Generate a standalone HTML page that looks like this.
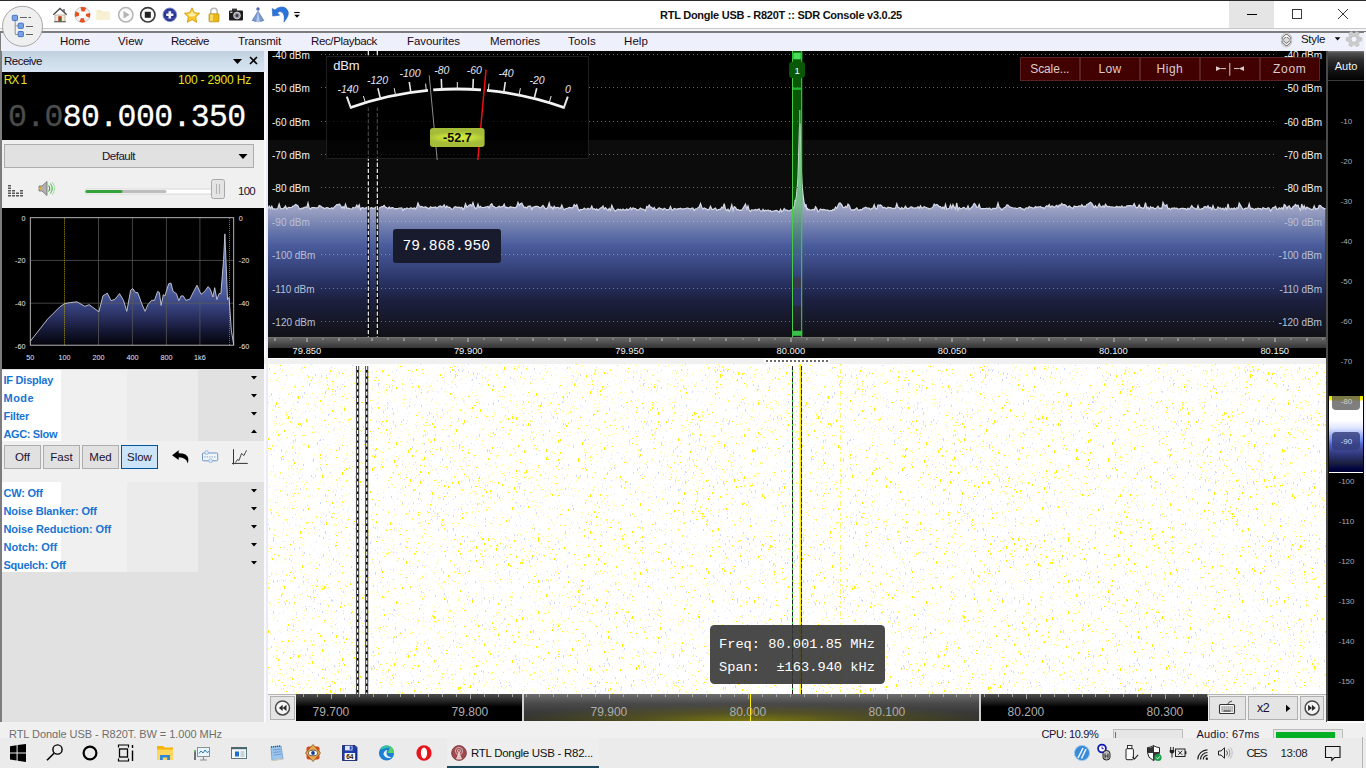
<!DOCTYPE html><html><head><meta charset="utf-8"><title>SDR Console</title><style>
html,body{margin:0;padding:0;}
body{width:1366px;height:768px;overflow:hidden;position:relative;background:#f0f0f0;font-family:"Liberation Sans",sans-serif;}
.t{position:absolute;white-space:pre;line-height:1;}
.r{position:absolute;}
.mono{font-family:"Liberation Mono",monospace;}
.serif{font-family:"Liberation Serif",serif;}
svg{position:absolute;left:0;top:0;overflow:visible;}
</style></head><body><div class="r" style="left:0px;top:0px;width:1366px;height:29px;background:#fff;"></div>
<div class="r" style="left:0px;top:0px;width:1366px;height:1px;background:#2b2b2b;"></div>
<div class="r" style="left:1229px;top:1px;width:45px;height:27px;background:#e5e5e5;"></div>
<svg width="1366" height="30"><path d="M1247 14.5h10" stroke="#000" stroke-width="1"/><rect x="1292.5" y="9.5" width="9" height="9" fill="none" stroke="#3a3a3a" stroke-width="1"/><path d="M1338 9l10 10M1348 9l-10 10" stroke="#3a3a3a" stroke-width="1"/></svg>
<span class="t" style="left:660.0px;top:10px;font-size:11px;color:#111;font-weight:bold;letter-spacing:-0.255px;">RTL Dongle USB - R820T :: SDR Console v3.0.25</span>
<div class="r" style="left:0px;top:28px;width:1366px;height:1px;background:#c8c8c8;"></div>
<div class="r" style="left:0px;top:29px;width:1366px;height:3px;background:#f4f5fc;"></div>
<div class="r" style="left:0px;top:31px;width:1366px;height:2px;background:#7d7d7d;"></div>
<div class="r" style="left:0px;top:33px;width:1366px;height:18px;background:#eef0fb;"></div>
<div class="r" style="left:0px;top:32px;width:1.3px;height:20px;background:#7d7d7d;"></div>
<div class="r" style="left:0px;top:51px;width:2px;height:671px;background:#7d7d7d;"></div>
<span class="t" style="left:60.0px;top:36px;font-size:11.5px;color:#1a0a1a;letter-spacing:-0.169px;">Home</span>
<span class="t" style="left:118.0px;top:36px;font-size:11.5px;color:#1a0a1a;letter-spacing:0.07px;">View</span>
<span class="t" style="left:171.0px;top:36px;font-size:11.5px;color:#1a0a1a;letter-spacing:-0.507px;">Receive</span>
<span class="t" style="left:238.0px;top:36px;font-size:11.5px;color:#1a0a1a;letter-spacing:-0.163px;">Transmit</span>
<span class="t" style="left:311.0px;top:36px;font-size:11.5px;color:#1a0a1a;letter-spacing:-0.359px;">Rec/Playback</span>
<span class="t" style="left:407.0px;top:36px;font-size:11.5px;color:#1a0a1a;letter-spacing:-0.069px;">Favourites</span>
<span class="t" style="left:490.0px;top:36px;font-size:11.5px;color:#1a0a1a;letter-spacing:-0.06px;">Memories</span>
<span class="t" style="left:568.0px;top:36px;font-size:11.5px;color:#1a0a1a;letter-spacing:0.231px;">Tools</span>
<span class="t" style="left:624.0px;top:36px;font-size:11.5px;color:#1a0a1a;letter-spacing:0.087px;">Help</span>
<span class="t" style="left:1301.0px;top:34px;font-size:11.5px;color:#111;letter-spacing:-0.313px;">Style</span>
<svg width="1366" height="60"><path d="M1334.800 37.200h5.600l-2.800 3.200z" fill="#000"/></svg>
<div class="r" style="left:2px;top:51px;width:266px;height:672px;background:#e9ebf9;"></div>
<div class="r" style="left:264px;top:72px;width:1.7px;height:650px;background:#fbfbfe;"></div>
<div class="r" style="left:2px;top:51px;width:262px;height:21px;background:linear-gradient(#c3cfde 0%,#c9d9e6 35%,#d0e0ee 70%,#d9e4f2 100%);"></div>
<span class="t" style="left:4.0px;top:56px;font-size:11.5px;color:#1a0a1a;letter-spacing:-0.507px;">Receive</span>
<svg width="270" height="80"><path d="M233 59h9l-4.5 5z" fill="#000"/><path d="M250 57l7 7M257 57l-7 7" stroke="#000" stroke-width="1.6"/></svg>
<div class="r" style="left:2px;top:72px;width:262px;height:68px;background:#000;"></div>
<span class="t" style="left:3.8px;top:74px;font-size:12px;color:#e8e020;letter-spacing:-1.095px;">RX 1</span>
<span class="t" style="left:178.0px;top:74px;font-size:12px;color:#e8e020;letter-spacing:-0.183px;">100 - 2900 Hz</span>
<span class="t mono" style="left:8.0px;top:102px;font-size:31.5px;color:#4c4c4c;letter-spacing:-0.63px;-webkit-text-stroke:0.3px #4c4c4c;">0.0</span>
<span class="t mono" style="left:62.8px;top:102px;font-size:31.5px;color:#fff;letter-spacing:-0.63px;-webkit-text-stroke:0.3px #fff;">80.000.350</span>
<div class="r" style="left:2px;top:140px;width:262px;height:68px;background:#f0f0f0;"></div>
<div class="r" style="left:4px;top:144px;width:250px;height:24px;background:#e1e1e1;border:1px solid #adadad;box-sizing:border-box;"></div>
<span class="t" style="left:102.0px;top:151px;font-size:11.5px;color:#1a1030;letter-spacing:-0.491px;">Default</span>
<svg width="270" height="200"><path d="M238.5 154h9l-4.5 5z" fill="#000"/></svg>
<div class="r" style="left:2px;top:208px;width:262px;height:161px;background:#000;"></div>
<div class="r" style="left:2px;top:369px;width:262px;height:354px;background:#e1e1e1;"></div>
<div class="r" style="left:2px;top:370px;width:59px;height:71px;background:#fff;"></div>
<div class="r" style="left:61px;top:370px;width:66px;height:71px;background:#f0f0f0;"></div>
<div class="r" style="left:127px;top:370px;width:71px;height:71px;background:#ebebeb;"></div>
<div class="r" style="left:2px;top:482px;width:59px;height:90px;background:#fff;"></div>
<div class="r" style="left:61px;top:482px;width:66px;height:90px;background:#f0f0f0;"></div>
<div class="r" style="left:127px;top:482px;width:71px;height:90px;background:#ebebeb;"></div>
<div class="r" style="left:2px;top:441px;width:262px;height:41px;background:#f0f0f0;"></div>
<span class="t" style="left:3.5px;top:375px;font-size:11px;color:#1874d2;font-weight:bold;letter-spacing:-0.236px;">IF Display</span>
<span class="t" style="left:3.5px;top:393px;font-size:11px;color:#1874d2;font-weight:bold;letter-spacing:0.495px;">Mode</span>
<span class="t" style="left:3.5px;top:411px;font-size:11px;color:#1874d2;font-weight:bold;letter-spacing:-0.232px;">Filter</span>
<span class="t" style="left:3.5px;top:429px;font-size:11px;color:#1874d2;font-weight:bold;letter-spacing:-0.359px;">AGC: Slow</span>
<span class="t" style="left:3.5px;top:488px;font-size:11px;color:#1874d2;font-weight:bold;letter-spacing:-0.219px;">CW: Off</span>
<span class="t" style="left:3.5px;top:506px;font-size:11px;color:#1874d2;font-weight:bold;letter-spacing:-0.143px;">Noise Blanker: Off</span>
<span class="t" style="left:3.5px;top:524px;font-size:11px;color:#1874d2;font-weight:bold;letter-spacing:-0.09px;">Noise Reduction: Off</span>
<span class="t" style="left:3.5px;top:542px;font-size:11px;color:#1874d2;font-weight:bold;letter-spacing:-0.017px;">Notch: Off</span>
<span class="t" style="left:3.5px;top:560px;font-size:11px;color:#1874d2;font-weight:bold;letter-spacing:-0.266px;">Squelch: Off</span>
<svg width="270" height="600"><path d="M251 376h6l-3 3.5z" fill="#000"/><path d="M251 394h6l-3 3.5z" fill="#000"/><path d="M251 412h6l-3 3.5z" fill="#000"/><path d="M251 433h6l-3-3.5z" fill="#000"/><path d="M251 489h6l-3 3.5z" fill="#000"/><path d="M251 507h6l-3 3.5z" fill="#000"/><path d="M251 525h6l-3 3.5z" fill="#000"/><path d="M251 543h6l-3 3.5z" fill="#000"/><path d="M251 561h6l-3 3.5z" fill="#000"/></svg>
<div class="r" style="left:4px;top:445px;width:37px;height:24px;background:#e1e1e1;border:1px solid #adadad;box-sizing:border-box;"></div>
<span class="t" style="left:14.9px;top:452px;font-size:11.5px;color:#1a1030;">Off</span>
<div class="r" style="left:43px;top:445px;width:37px;height:24px;background:#e1e1e1;border:1px solid #adadad;box-sizing:border-box;"></div>
<span class="t" style="left:50.3px;top:452px;font-size:11.5px;color:#1a1030;">Fast</span>
<div class="r" style="left:82px;top:445px;width:37px;height:24px;background:#e1e1e1;border:1px solid #adadad;box-sizing:border-box;"></div>
<span class="t" style="left:89.3px;top:452px;font-size:11.5px;color:#1a1030;">Med</span>
<div class="r" style="left:121px;top:445px;width:37px;height:24px;background:#cce4f7;border:1px solid #005499;box-sizing:border-box;"></div>
<span class="t" style="left:127.0px;top:452px;font-size:11.5px;color:#1a1030;">Slow</span>
<svg width="270" height="380"><defs><linearGradient id="ag" gradientUnits="userSpaceOnUse" x1="0" y1="282" x2="0" y2="345"><stop offset="0" stop-color="#5a6cae"/><stop offset="0.35" stop-color="#3a4684"/><stop offset="0.6" stop-color="#252b58"/><stop offset="0.8" stop-color="#12152e"/><stop offset="1" stop-color="#04040c"/></linearGradient></defs><polygon points="30.3,341.2 47.6,319.1 59.8,306.9 64.6,303.6 70.8,302.5 77.0,301.8 84.8,306.3 89.2,304.7 95.2,309.1 98.9,311.8 102.9,295.9 107.3,293.2 111.1,300.7 115.1,299.2 119.5,293.6 123.5,300.3 126.8,311.3 130.6,290.3 132.8,288.6 135.5,292.5 137.7,292.5 141.7,303.6 145.0,311.3 147.9,304.7 151.6,300.3 154.5,300.3 157.6,291.4 159.4,292.5 161.1,305.4 163.3,294.7 164.9,295.9 168.7,283.7 170.9,283.0 173.1,291.4 176.4,293.6 178.8,300.7 181.1,295.9 183.3,295.9 185.9,300.3 189.9,299.2 193.7,291.4 197.0,285.2 201.0,294.3 204.7,291.4 208.1,286.6 210.3,289.2 212.9,297.0 214.7,287.7 216.9,299.6 219.1,293.6 220.9,293.6 223.6,259.3 224.9,233.9 226.2,266.0 227.5,299.6 229.1,297.4 231.3,330.2 233.7,344.8 233.7,345.2 30.3,345.2" fill="url(#ag)"/><path d="M98.5 218V345" stroke="#5a5a5a" stroke-width="1" opacity="0.75"/><path d="M132.4 218V345" stroke="#5a5a5a" stroke-width="1" opacity="0.75"/><path d="M166.4 218V345" stroke="#5a5a5a" stroke-width="1" opacity="0.75"/><path d="M199.9 218V345" stroke="#5a5a5a" stroke-width="1" opacity="0.75"/><path d="M30.5 260.4H233.5" stroke="#5a5a5a" stroke-width="1" opacity="0.75"/><path d="M30.5 303.2H233.5" stroke="#5a5a5a" stroke-width="1" opacity="0.75"/><path d="M64.6 218V345" stroke="#c8b400" stroke-width="0.8" stroke-dasharray="1.5 0.7" opacity="0.85"/><path d="M229.5 218V345" stroke="#c8a000" stroke-width="0.8" stroke-dasharray="1 1" opacity="0.85"/><polyline points="30.3,341.2 47.6,319.1 59.8,306.9 64.6,303.6 70.8,302.5 77.0,301.8 84.8,306.3 89.2,304.7 95.2,309.1 98.9,311.8 102.9,295.9 107.3,293.2 111.1,300.7 115.1,299.2 119.5,293.6 123.5,300.3 126.8,311.3 130.6,290.3 132.8,288.6 135.5,292.5 137.7,292.5 141.7,303.6 145.0,311.3 147.9,304.7 151.6,300.3 154.5,300.3 157.6,291.4 159.4,292.5 161.1,305.4 163.3,294.7 164.9,295.9 168.7,283.7 170.9,283.0 173.1,291.4 176.4,293.6 178.8,300.7 181.1,295.9 183.3,295.9 185.9,300.3 189.9,299.2 193.7,291.4 197.0,285.2 201.0,294.3 204.7,291.4 208.1,286.6 210.3,289.2 212.9,297.0 214.7,287.7 216.9,299.6 219.1,293.6 220.9,293.6 223.6,259.3 224.9,233.9 226.2,266.0 227.5,299.6 229.1,297.4 231.3,330.2 233.7,344.8" fill="none" stroke="#c9ccd6" stroke-width="0.9"/><rect x="30.3" y="217.7" width="203.4" height="127.5" fill="none" stroke="#c8c8c8" stroke-width="0.9"/></svg>
<span class="t" style="left:21.5px;top:215px;font-size:7.2px;color:#e8e8f0;">0</span>
<span class="t" style="left:238.8px;top:215px;font-size:7.2px;color:#e8e8f0;">0</span>
<span class="t" style="left:15.1px;top:257px;font-size:7.2px;color:#e8e8f0;">-20</span>
<span class="t" style="left:238.8px;top:257px;font-size:7.2px;color:#e8e8f0;">-20</span>
<span class="t" style="left:15.1px;top:300px;font-size:7.2px;color:#e8e8f0;">-40</span>
<span class="t" style="left:238.8px;top:300px;font-size:7.2px;color:#e8e8f0;">-40</span>
<span class="t" style="left:15.1px;top:343px;font-size:7.2px;color:#e8e8f0;">-60</span>
<span class="t" style="left:238.8px;top:343px;font-size:7.2px;color:#e8e8f0;">-60</span>
<span class="t" style="left:26.3px;top:354px;font-size:7.2px;color:#e8e8f0;">50</span>
<span class="t" style="left:58.6px;top:354px;font-size:7.2px;color:#e8e8f0;">100</span>
<span class="t" style="left:92.5px;top:354px;font-size:7.2px;color:#e8e8f0;">200</span>
<span class="t" style="left:126.4px;top:354px;font-size:7.2px;color:#e8e8f0;">400</span>
<span class="t" style="left:160.4px;top:354px;font-size:7.2px;color:#e8e8f0;">800</span>
<span class="t" style="left:194.1px;top:354px;font-size:7.2px;color:#e8e8f0;">1k6</span>
<svg width="270" height="210"><rect x="8" y="195.0" width="3" height="1.5" fill="#555"/><rect x="8" y="192.5" width="3" height="1.5" fill="#555"/><rect x="8" y="190.0" width="3" height="1.5" fill="#555"/><rect x="8" y="187.5" width="3" height="1.5" fill="#555"/><rect x="8" y="185.0" width="3" height="1.5" fill="#555"/><rect x="12" y="195.0" width="3" height="1.5" fill="#555"/><rect x="12" y="192.5" width="3" height="1.5" fill="#555"/><rect x="12" y="190.0" width="3" height="1.5" fill="#555"/><rect x="16" y="195.0" width="3" height="1.5" fill="#555"/><rect x="16" y="192.5" width="3" height="1.5" fill="#555"/><rect x="20" y="195.0" width="3" height="1.5" fill="#555"/><rect x="20" y="192.5" width="3" height="1.5" fill="#555"/><rect x="20" y="190.0" width="3" height="1.5" fill="#555"/><path d="M39 186h3l5-4.5v14l-5-4.5h-3z" fill="#b0b0b0" stroke="#707070" stroke-width="0.8"/><circle cx="40.5" cy="188.5" r="1.4" fill="#e8b020"/><path d="M48.5 185.5q2.5 3 0 6" fill="none" stroke="#3aa03a" stroke-width="1.1"/><path d="M50.3 183.5q4 5 0 10" fill="none" stroke="#58c058" stroke-width="1.1"/><path d="M52.2 182q5 6.5 0 13" fill="none" stroke="#9ad89a" stroke-width="0.9"/><rect x="85" y="189" width="127" height="5" rx="2" fill="#fdfdfd" stroke="#d0d0d0" stroke-width="0.8"/><rect x="85.5" y="190" width="81" height="3" rx="1.5" fill="#bdbdbd"/><rect x="85.5" y="190" width="37" height="3" rx="1.5" fill="#35a33b"/><rect x="211.5" y="179.5" width="13" height="19" rx="2" fill="#e4e4e4" stroke="#a8a8a8" stroke-width="1"/><path d="M216.5 184v10M219.5 184v10" stroke="#b4b4b4" stroke-width="1"/></svg>
<span class="t" style="left:238.0px;top:186px;font-size:11.5px;color:#1a1030;letter-spacing:-0.729px;">100</span>
<svg width="270" height="480"><path d="M172.100 455.200L178.700 450.200V453.200Q187.500 453.200 188.300 458.500Q188.600 461 187.700 463.600Q186.500 457.500 178.700 457.300V460.100Z" fill="#000"/><rect x="202.500" y="453" width="15.200" height="7.800" rx="1" fill="#f2f6fb" stroke="#6a94c8" stroke-width="1"/><path d="M204 456.900h12.500" stroke="#9ab4d4" stroke-width="1.400" stroke-dasharray="1.500 1"/><circle cx="206.600" cy="452.600" r="1.900" fill="#dce8f6" stroke="#8aacd6" stroke-width="0.700"/><circle cx="210.600" cy="460.700" r="1.900" fill="#dce8f6" stroke="#8aacd6" stroke-width="0.700"/><path d="M233.500 449.200V464.500M232 463.400H247.800" stroke="#333" stroke-width="1" fill="none"/><path d="M235.500 462.500l2-3 1.500 1 2.500-7 2.500 2 2.500-5.200" stroke="#333" stroke-width="0.900" fill="none"/></svg>
<div class="r" style="left:268px;top:51px;width:1058px;height:89px;background:#000;"></div>
<div class="r" style="left:268px;top:140px;width:1058px;height:197px;background:#0c0c0c;"></div>
<svg width="1366" height="360"><defs><linearGradient id="sg" gradientUnits="userSpaceOnUse" x1="0" y1="205" x2="0" y2="337"><stop offset="0.000" stop-color="#a2a8c8"/><stop offset="0.076" stop-color="#8e96bc"/><stop offset="0.174" stop-color="#6e7cae"/><stop offset="0.303" stop-color="#4a5c9c"/><stop offset="0.432" stop-color="#3c4a86"/><stop offset="0.568" stop-color="#2a3466"/><stop offset="0.720" stop-color="#1c2040"/><stop offset="0.871" stop-color="#161828"/><stop offset="1.000" stop-color="#111116"/></linearGradient></defs><rect x="792" y="51" width="10.2" height="286" fill="#085808"/><polygon points="268.0,208.7 269.2,206.1 270.5,208.6 271.8,206.1 273.0,209.0 274.2,208.8 275.5,209.0 276.8,209.0 278.0,207.8 279.2,204.0 280.5,208.3 281.8,208.8 283.0,208.6 284.2,207.8 285.5,205.9 286.8,209.0 288.0,207.8 289.2,207.4 290.5,207.5 291.8,207.5 293.0,206.1 294.2,205.8 295.5,204.4 296.8,205.1 298.0,205.8 299.2,208.6 300.5,209.0 301.8,208.2 303.0,208.3 304.2,207.3 305.5,207.0 306.8,207.4 308.0,203.0 309.2,207.9 310.5,209.2 311.8,207.7 313.0,207.6 314.2,207.5 315.5,207.9 316.8,207.9 318.0,207.7 319.2,205.6 320.5,206.1 321.8,207.1 323.0,207.5 324.2,208.5 325.5,208.1 326.8,207.5 328.0,207.7 329.2,208.6 330.5,208.5 331.8,207.7 333.0,208.8 334.2,207.1 335.5,206.1 336.8,204.7 338.0,204.7 339.2,204.0 340.5,205.4 341.8,208.2 343.0,206.6 344.2,208.4 345.5,204.3 346.8,208.3 348.0,208.2 349.2,208.3 350.5,209.0 351.8,209.0 353.0,207.5 354.2,207.9 355.5,207.8 356.8,205.1 358.0,207.5 359.2,204.8 360.5,209.6 361.8,207.8 363.0,207.7 364.2,208.4 365.5,208.2 366.8,207.4 368.0,209.7 369.2,208.0 370.5,208.1 371.8,207.6 373.0,208.4 374.2,208.2 375.5,207.5 376.8,206.4 378.0,210.2 379.2,207.9 380.5,207.2 381.8,206.7 383.0,206.5 384.2,205.4 385.5,207.3 386.8,207.8 388.0,208.6 389.2,207.0 390.5,208.5 391.8,207.7 393.0,207.7 394.2,208.9 395.5,208.6 396.8,208.7 398.0,208.5 399.2,208.0 400.5,208.0 401.8,207.8 403.0,210.5 404.2,208.6 405.5,209.1 406.8,208.0 408.0,208.5 409.2,208.9 410.5,207.8 411.8,208.0 413.0,208.9 414.2,207.9 415.5,209.0 416.8,207.2 418.0,203.0 419.2,205.6 420.5,207.0 421.8,206.5 423.0,207.3 424.2,207.1 425.5,206.8 426.8,207.6 428.0,208.1 429.2,208.7 430.5,206.8 431.8,207.5 433.0,207.3 434.2,207.3 435.5,207.0 436.8,208.2 438.0,207.3 439.2,206.3 440.5,206.0 441.8,207.1 443.0,206.1 444.2,204.8 445.5,208.0 446.8,206.0 448.0,207.4 449.2,207.2 450.5,207.9 451.8,209.4 453.0,209.0 454.2,207.3 455.5,206.7 456.8,207.3 458.0,207.3 459.2,207.2 460.5,208.0 461.8,207.3 463.0,209.4 464.2,208.1 465.5,203.8 466.8,207.0 468.0,206.2 469.2,205.2 470.5,204.4 471.8,205.8 473.0,202.6 474.2,206.6 475.5,208.6 476.8,207.8 478.0,204.2 479.2,207.7 480.5,206.3 481.8,207.7 483.0,207.5 484.2,207.5 485.5,206.9 486.8,207.0 488.0,206.3 489.2,208.0 490.5,204.8 491.8,203.7 493.0,206.2 494.2,206.6 495.5,207.9 496.8,207.6 498.0,207.1 499.2,206.0 500.5,207.5 501.8,206.6 503.0,206.2 504.2,204.2 505.5,207.9 506.8,207.3 508.0,208.1 509.2,207.6 510.5,206.7 511.8,207.4 513.0,207.3 514.2,207.6 515.5,207.9 516.8,206.1 518.0,202.5 519.2,205.2 520.5,203.8 521.8,203.0 523.0,205.4 524.2,207.5 525.5,207.2 526.8,208.1 528.0,206.4 529.2,206.1 530.5,206.1 531.8,209.3 533.0,207.1 534.2,207.1 535.5,206.4 536.8,206.4 538.0,206.5 539.2,207.3 540.5,208.0 541.8,206.6 543.0,205.5 544.2,207.1 545.5,208.9 546.8,208.6 548.0,206.9 549.2,203.0 550.5,207.8 551.8,206.9 553.0,209.1 554.2,206.2 555.5,208.0 556.8,207.5 558.0,207.3 559.2,208.2 560.5,208.3 561.8,205.2 563.0,208.3 564.2,209.7 565.5,208.7 566.8,208.4 568.0,208.0 569.2,207.4 570.5,207.7 571.8,208.0 573.0,207.3 574.2,204.6 575.5,206.1 576.8,204.6 578.0,208.3 579.2,210.7 580.5,209.5 581.8,209.7 583.0,209.3 584.2,208.1 585.5,209.2 586.8,209.2 588.0,208.2 589.2,209.1 590.5,208.7 591.8,206.0 593.0,209.4 594.2,208.8 595.5,209.7 596.8,208.8 598.0,210.3 599.2,209.1 600.5,208.1 601.8,207.5 603.0,205.9 604.2,209.1 605.5,207.7 606.8,209.1 608.0,210.5 609.2,208.4 610.5,210.3 611.8,205.3 613.0,208.1 614.2,209.8 615.5,211.1 616.8,210.0 618.0,209.0 619.2,210.0 620.5,209.3 621.8,210.6 623.0,209.0 624.2,209.7 625.5,210.2 626.8,208.8 628.0,210.2 629.2,209.3 630.5,207.7 631.8,209.7 633.0,207.8 634.2,208.6 635.5,208.5 636.8,209.8 638.0,209.9 639.2,209.5 640.5,208.1 641.8,209.2 643.0,209.1 644.2,209.8 645.5,210.7 646.8,206.5 648.0,207.2 649.2,205.0 650.5,207.3 651.8,207.4 653.0,209.6 654.2,207.4 655.5,209.6 656.8,209.8 658.0,208.8 659.2,207.8 660.5,208.7 661.8,208.9 663.0,209.9 664.2,208.3 665.5,208.9 666.8,210.0 668.0,209.7 669.2,209.3 670.5,206.6 671.8,209.9 673.0,209.9 674.2,208.5 675.5,208.8 676.8,209.4 678.0,208.7 679.2,208.9 680.5,208.2 681.8,209.0 683.0,208.8 684.2,208.9 685.5,208.5 686.8,208.2 688.0,208.2 689.2,208.7 690.5,209.0 691.8,208.2 693.0,208.2 694.2,210.6 695.5,208.9 696.8,209.0 698.0,207.7 699.2,207.0 700.5,203.6 701.8,207.3 703.0,209.0 704.2,207.9 705.5,208.6 706.8,209.3 708.0,210.0 709.2,209.1 710.5,206.3 711.8,209.3 713.0,209.3 714.2,208.8 715.5,208.0 716.8,210.2 718.0,209.9 719.2,209.3 720.5,209.3 721.8,207.1 723.0,208.0 724.2,203.6 725.5,209.1 726.8,210.5 728.0,209.0 729.2,211.3 730.5,209.2 731.8,204.9 733.0,210.4 734.2,206.6 735.5,207.5 736.8,209.8 738.0,209.5 739.2,210.4 740.5,210.2 741.8,210.4 743.0,208.3 744.2,206.2 745.5,204.1 746.8,209.1 748.0,205.9 749.2,210.1 750.5,211.5 751.8,209.7 753.0,210.2 754.2,210.1 755.5,209.4 756.8,210.2 758.0,209.4 759.2,208.9 760.5,211.2 761.8,211.2 763.0,209.3 764.2,211.1 765.5,210.2 766.8,210.7 768.0,209.9 769.2,211.0 770.5,210.5 771.8,211.8 773.0,211.1 774.2,210.9 775.5,210.6 776.8,210.3 778.0,211.2 779.2,212.5 780.5,209.4 781.8,211.6 783.0,210.8 784.2,208.6 785.5,210.1 786.8,210.1 788.0,210.6 789.2,210.9 790.5,210.1 791.8,209.7 793.0,208.8 793.5,208.5 794.0,206.7 794.5,205.7 795.0,201.1 795.5,201.8 796.0,198.8 796.5,196.0 797.0,190.3 797.5,185.1 798.0,177.3 798.5,161.9 799.0,144.2 799.5,127.4 800.0,123.4 800.5,144.1 801.0,161.2 801.5,173.5 802.0,182.9 802.5,189.3 803.0,194.3 803.5,198.6 804.0,201.9 804.5,203.6 805.0,206.0 805.5,206.6 806.0,204.2 806.5,208.2 807.0,209.7 807.5,208.6 808.0,209.6 809.2,209.4 810.5,210.4 811.8,209.8 813.0,209.5 814.2,210.2 815.5,206.8 816.8,208.6 818.0,211.7 819.2,210.6 820.5,209.1 821.8,209.8 823.0,209.4 824.2,209.6 825.5,209.9 826.8,210.1 828.0,210.1 829.2,211.3 830.5,210.3 831.8,210.7 833.0,209.5 834.2,209.9 835.5,207.1 836.8,208.5 838.0,205.4 839.2,203.1 840.5,203.0 841.8,204.9 843.0,207.3 844.2,207.8 845.5,206.3 846.8,207.4 848.0,204.2 849.2,205.4 850.5,209.0 851.8,210.4 853.0,209.7 854.2,209.8 855.5,209.0 856.8,207.9 858.0,209.9 859.2,210.5 860.5,209.5 861.8,210.0 863.0,208.3 864.2,208.2 865.5,207.2 866.8,207.9 868.0,208.1 869.2,208.0 870.5,209.6 871.8,208.4 873.0,208.0 874.2,204.7 875.5,208.4 876.8,209.0 878.0,204.9 879.2,205.3 880.5,205.0 881.8,206.0 883.0,207.9 884.2,207.1 885.5,207.9 886.8,208.5 888.0,207.2 889.2,207.6 890.5,207.7 891.8,208.1 893.0,208.3 894.2,208.3 895.5,208.2 896.8,203.8 898.0,207.3 899.2,207.7 900.5,209.2 901.8,207.5 903.0,208.9 904.2,208.2 905.5,206.1 906.8,208.5 908.0,208.3 909.2,208.4 910.5,207.0 911.8,206.8 913.0,207.9 914.2,208.2 915.5,207.9 916.8,207.9 918.0,206.7 919.2,208.3 920.5,205.9 921.8,208.4 923.0,207.5 924.2,206.6 925.5,207.2 926.8,207.8 928.0,208.0 929.2,209.2 930.5,208.2 931.8,208.0 933.0,207.0 934.2,204.0 935.5,205.2 936.8,204.4 938.0,205.3 939.2,206.6 940.5,206.7 941.8,208.5 943.0,207.1 944.2,208.8 945.5,204.3 946.8,209.4 948.0,208.7 949.2,208.4 950.5,204.9 951.8,208.5 953.0,204.7 954.2,207.2 955.5,209.0 956.8,203.0 958.0,210.1 959.2,207.5 960.5,208.6 961.8,208.6 963.0,207.5 964.2,207.4 965.5,208.8 966.8,208.8 968.0,205.9 969.2,209.3 970.5,208.4 971.8,207.3 973.0,205.5 974.2,203.4 975.5,204.7 976.8,207.4 978.0,207.3 979.2,204.5 980.5,208.6 981.8,208.6 983.0,208.7 984.2,208.6 985.5,208.7 986.8,208.1 988.0,208.9 989.2,208.0 990.5,208.8 991.8,209.7 993.0,208.3 994.2,208.3 995.5,208.8 996.8,207.4 998.0,203.0 999.2,207.4 1000.5,208.3 1001.8,210.1 1003.0,208.8 1004.2,207.8 1005.5,207.3 1006.8,204.9 1008.0,205.1 1009.2,206.6 1010.5,207.1 1011.8,207.5 1013.0,207.8 1014.2,208.0 1015.5,208.2 1016.8,208.6 1018.0,208.3 1019.2,207.7 1020.5,207.6 1021.8,208.8 1023.0,208.8 1024.2,209.9 1025.5,208.2 1026.8,207.8 1028.0,208.2 1029.2,206.5 1030.5,207.5 1031.8,207.4 1033.0,208.4 1034.2,207.8 1035.5,206.5 1036.8,207.5 1038.0,206.9 1039.2,207.0 1040.5,206.5 1041.8,207.8 1043.0,207.5 1044.2,208.6 1045.5,206.8 1046.8,205.8 1048.0,206.6 1049.2,204.6 1050.5,207.4 1051.8,205.9 1053.0,206.3 1054.2,207.5 1055.5,206.2 1056.8,205.4 1058.0,207.1 1059.2,204.9 1060.5,205.4 1061.8,203.4 1063.0,204.8 1064.2,204.7 1065.5,205.1 1066.8,206.5 1068.0,207.2 1069.2,205.9 1070.5,207.0 1071.8,207.9 1073.0,208.4 1074.2,206.0 1075.5,206.6 1076.8,206.7 1078.0,206.4 1079.2,205.9 1080.5,206.5 1081.8,204.7 1083.0,206.9 1084.2,205.9 1085.5,206.9 1086.8,204.4 1088.0,204.1 1089.2,203.2 1090.5,202.2 1091.8,203.3 1093.0,205.4 1094.2,207.6 1095.5,205.7 1096.8,207.9 1098.0,206.7 1099.2,203.9 1100.5,206.6 1101.8,207.3 1103.0,205.7 1104.2,207.3 1105.5,204.2 1106.8,206.1 1108.0,206.9 1109.2,206.4 1110.5,207.0 1111.8,206.9 1113.0,207.0 1114.2,207.4 1115.5,207.1 1116.8,206.3 1118.0,207.2 1119.2,206.7 1120.5,207.4 1121.8,206.0 1123.0,207.5 1124.2,206.8 1125.5,207.3 1126.8,205.9 1128.0,205.8 1129.2,205.6 1130.5,205.7 1131.8,206.1 1133.0,205.8 1134.2,203.6 1135.5,206.6 1136.8,207.9 1138.0,207.1 1139.2,204.9 1140.5,207.7 1141.8,207.7 1143.0,208.5 1144.2,207.6 1145.5,202.6 1146.8,208.2 1148.0,207.2 1149.2,209.5 1150.5,206.8 1151.8,208.0 1153.0,207.3 1154.2,208.7 1155.5,208.7 1156.8,207.6 1158.0,206.2 1159.2,208.3 1160.5,208.1 1161.8,208.5 1163.0,202.4 1164.2,205.1 1165.5,205.7 1166.8,204.8 1168.0,208.9 1169.2,208.2 1170.5,209.7 1171.8,208.2 1173.0,208.4 1174.2,207.8 1175.5,208.4 1176.8,208.1 1178.0,209.0 1179.2,209.1 1180.5,208.5 1181.8,208.3 1183.0,208.4 1184.2,208.7 1185.5,208.6 1186.8,209.8 1188.0,208.1 1189.2,209.4 1190.5,207.5 1191.8,205.6 1193.0,207.5 1194.2,208.0 1195.5,208.8 1196.8,209.3 1198.0,205.6 1199.2,209.2 1200.5,209.4 1201.8,208.5 1203.0,208.9 1204.2,206.8 1205.5,206.6 1206.8,207.6 1208.0,205.7 1209.2,208.1 1210.5,207.3 1211.8,209.5 1213.0,205.6 1214.2,208.9 1215.5,209.6 1216.8,209.3 1218.0,207.0 1219.2,208.3 1220.5,207.9 1221.8,209.4 1223.0,208.2 1224.2,209.8 1225.5,207.9 1226.8,209.8 1228.0,203.9 1229.2,208.6 1230.5,209.2 1231.8,208.2 1233.0,209.4 1234.2,207.9 1235.5,209.4 1236.8,207.7 1238.0,208.4 1239.2,203.1 1240.5,205.2 1241.8,207.5 1243.0,209.4 1244.2,209.1 1245.5,208.1 1246.8,208.4 1248.0,207.9 1249.2,203.8 1250.5,208.8 1251.8,208.1 1253.0,208.7 1254.2,209.7 1255.5,208.7 1256.8,209.1 1258.0,208.2 1259.2,208.6 1260.5,208.6 1261.8,209.6 1263.0,207.6 1264.2,208.4 1265.5,208.7 1266.8,209.0 1268.0,207.7 1269.2,208.2 1270.5,211.1 1271.8,209.2 1273.0,207.5 1274.2,207.4 1275.5,206.3 1276.8,209.3 1278.0,209.1 1279.2,207.8 1280.5,208.7 1281.8,207.7 1283.0,209.4 1284.2,204.6 1285.5,205.5 1286.8,208.9 1288.0,206.7 1289.2,205.8 1290.5,208.3 1291.8,208.9 1293.0,206.6 1294.2,206.0 1295.5,204.5 1296.8,206.0 1298.0,205.1 1299.2,208.0 1300.5,210.2 1301.8,204.0 1303.0,208.6 1304.2,205.8 1305.5,209.0 1306.8,207.1 1308.0,207.9 1309.2,208.3 1310.5,209.0 1311.8,209.5 1313.0,209.2 1314.2,205.9 1315.5,209.3 1316.8,208.7 1318.0,208.7 1319.2,205.4 1320.5,205.5 1321.8,207.2 1323.0,207.8 1324.2,208.8 1325.5,208.4 1326,337 268,337" fill="url(#sg)"/><polyline points="268.0,208.7 269.2,206.1 270.5,208.6 271.8,206.1 273.0,209.0 274.2,208.8 275.5,209.0 276.8,209.0 278.0,207.8 279.2,204.0 280.5,208.3 281.8,208.8 283.0,208.6 284.2,207.8 285.5,205.9 286.8,209.0 288.0,207.8 289.2,207.4 290.5,207.5 291.8,207.5 293.0,206.1 294.2,205.8 295.5,204.4 296.8,205.1 298.0,205.8 299.2,208.6 300.5,209.0 301.8,208.2 303.0,208.3 304.2,207.3 305.5,207.0 306.8,207.4 308.0,203.0 309.2,207.9 310.5,209.2 311.8,207.7 313.0,207.6 314.2,207.5 315.5,207.9 316.8,207.9 318.0,207.7 319.2,205.6 320.5,206.1 321.8,207.1 323.0,207.5 324.2,208.5 325.5,208.1 326.8,207.5 328.0,207.7 329.2,208.6 330.5,208.5 331.8,207.7 333.0,208.8 334.2,207.1 335.5,206.1 336.8,204.7 338.0,204.7 339.2,204.0 340.5,205.4 341.8,208.2 343.0,206.6 344.2,208.4 345.5,204.3 346.8,208.3 348.0,208.2 349.2,208.3 350.5,209.0 351.8,209.0 353.0,207.5 354.2,207.9 355.5,207.8 356.8,205.1 358.0,207.5 359.2,204.8 360.5,209.6 361.8,207.8 363.0,207.7 364.2,208.4 365.5,208.2 366.8,207.4 368.0,209.7 369.2,208.0 370.5,208.1 371.8,207.6 373.0,208.4 374.2,208.2 375.5,207.5 376.8,206.4 378.0,210.2 379.2,207.9 380.5,207.2 381.8,206.7 383.0,206.5 384.2,205.4 385.5,207.3 386.8,207.8 388.0,208.6 389.2,207.0 390.5,208.5 391.8,207.7 393.0,207.7 394.2,208.9 395.5,208.6 396.8,208.7 398.0,208.5 399.2,208.0 400.5,208.0 401.8,207.8 403.0,210.5 404.2,208.6 405.5,209.1 406.8,208.0 408.0,208.5 409.2,208.9 410.5,207.8 411.8,208.0 413.0,208.9 414.2,207.9 415.5,209.0 416.8,207.2 418.0,203.0 419.2,205.6 420.5,207.0 421.8,206.5 423.0,207.3 424.2,207.1 425.5,206.8 426.8,207.6 428.0,208.1 429.2,208.7 430.5,206.8 431.8,207.5 433.0,207.3 434.2,207.3 435.5,207.0 436.8,208.2 438.0,207.3 439.2,206.3 440.5,206.0 441.8,207.1 443.0,206.1 444.2,204.8 445.5,208.0 446.8,206.0 448.0,207.4 449.2,207.2 450.5,207.9 451.8,209.4 453.0,209.0 454.2,207.3 455.5,206.7 456.8,207.3 458.0,207.3 459.2,207.2 460.5,208.0 461.8,207.3 463.0,209.4 464.2,208.1 465.5,203.8 466.8,207.0 468.0,206.2 469.2,205.2 470.5,204.4 471.8,205.8 473.0,202.6 474.2,206.6 475.5,208.6 476.8,207.8 478.0,204.2 479.2,207.7 480.5,206.3 481.8,207.7 483.0,207.5 484.2,207.5 485.5,206.9 486.8,207.0 488.0,206.3 489.2,208.0 490.5,204.8 491.8,203.7 493.0,206.2 494.2,206.6 495.5,207.9 496.8,207.6 498.0,207.1 499.2,206.0 500.5,207.5 501.8,206.6 503.0,206.2 504.2,204.2 505.5,207.9 506.8,207.3 508.0,208.1 509.2,207.6 510.5,206.7 511.8,207.4 513.0,207.3 514.2,207.6 515.5,207.9 516.8,206.1 518.0,202.5 519.2,205.2 520.5,203.8 521.8,203.0 523.0,205.4 524.2,207.5 525.5,207.2 526.8,208.1 528.0,206.4 529.2,206.1 530.5,206.1 531.8,209.3 533.0,207.1 534.2,207.1 535.5,206.4 536.8,206.4 538.0,206.5 539.2,207.3 540.5,208.0 541.8,206.6 543.0,205.5 544.2,207.1 545.5,208.9 546.8,208.6 548.0,206.9 549.2,203.0 550.5,207.8 551.8,206.9 553.0,209.1 554.2,206.2 555.5,208.0 556.8,207.5 558.0,207.3 559.2,208.2 560.5,208.3 561.8,205.2 563.0,208.3 564.2,209.7 565.5,208.7 566.8,208.4 568.0,208.0 569.2,207.4 570.5,207.7 571.8,208.0 573.0,207.3 574.2,204.6 575.5,206.1 576.8,204.6 578.0,208.3 579.2,210.7 580.5,209.5 581.8,209.7 583.0,209.3 584.2,208.1 585.5,209.2 586.8,209.2 588.0,208.2 589.2,209.1 590.5,208.7 591.8,206.0 593.0,209.4 594.2,208.8 595.5,209.7 596.8,208.8 598.0,210.3 599.2,209.1 600.5,208.1 601.8,207.5 603.0,205.9 604.2,209.1 605.5,207.7 606.8,209.1 608.0,210.5 609.2,208.4 610.5,210.3 611.8,205.3 613.0,208.1 614.2,209.8 615.5,211.1 616.8,210.0 618.0,209.0 619.2,210.0 620.5,209.3 621.8,210.6 623.0,209.0 624.2,209.7 625.5,210.2 626.8,208.8 628.0,210.2 629.2,209.3 630.5,207.7 631.8,209.7 633.0,207.8 634.2,208.6 635.5,208.5 636.8,209.8 638.0,209.9 639.2,209.5 640.5,208.1 641.8,209.2 643.0,209.1 644.2,209.8 645.5,210.7 646.8,206.5 648.0,207.2 649.2,205.0 650.5,207.3 651.8,207.4 653.0,209.6 654.2,207.4 655.5,209.6 656.8,209.8 658.0,208.8 659.2,207.8 660.5,208.7 661.8,208.9 663.0,209.9 664.2,208.3 665.5,208.9 666.8,210.0 668.0,209.7 669.2,209.3 670.5,206.6 671.8,209.9 673.0,209.9 674.2,208.5 675.5,208.8 676.8,209.4 678.0,208.7 679.2,208.9 680.5,208.2 681.8,209.0 683.0,208.8 684.2,208.9 685.5,208.5 686.8,208.2 688.0,208.2 689.2,208.7 690.5,209.0 691.8,208.2 693.0,208.2 694.2,210.6 695.5,208.9 696.8,209.0 698.0,207.7 699.2,207.0 700.5,203.6 701.8,207.3 703.0,209.0 704.2,207.9 705.5,208.6 706.8,209.3 708.0,210.0 709.2,209.1 710.5,206.3 711.8,209.3 713.0,209.3 714.2,208.8 715.5,208.0 716.8,210.2 718.0,209.9 719.2,209.3 720.5,209.3 721.8,207.1 723.0,208.0 724.2,203.6 725.5,209.1 726.8,210.5 728.0,209.0 729.2,211.3 730.5,209.2 731.8,204.9 733.0,210.4 734.2,206.6 735.5,207.5 736.8,209.8 738.0,209.5 739.2,210.4 740.5,210.2 741.8,210.4 743.0,208.3 744.2,206.2 745.5,204.1 746.8,209.1 748.0,205.9 749.2,210.1 750.5,211.5 751.8,209.7 753.0,210.2 754.2,210.1 755.5,209.4 756.8,210.2 758.0,209.4 759.2,208.9 760.5,211.2 761.8,211.2 763.0,209.3 764.2,211.1 765.5,210.2 766.8,210.7 768.0,209.9 769.2,211.0 770.5,210.5 771.8,211.8 773.0,211.1 774.2,210.9 775.5,210.6 776.8,210.3 778.0,211.2 779.2,212.5 780.5,209.4 781.8,211.6 783.0,210.8 784.2,208.6 785.5,210.1 786.8,210.1 788.0,210.6 789.2,210.9 790.5,210.1 791.8,209.7 793.0,208.8 793.5,208.5 794.0,206.7 794.5,205.7 795.0,201.1 795.5,201.8 796.0,198.8 796.5,196.0 797.0,190.3 797.5,185.1 798.0,177.3 798.5,161.9 799.0,144.2 799.5,127.4 800.0,123.4 800.5,144.1 801.0,161.2 801.5,173.5 802.0,182.9 802.5,189.3 803.0,194.3 803.5,198.6 804.0,201.9 804.5,203.6 805.0,206.0 805.5,206.6 806.0,204.2 806.5,208.2 807.0,209.7 807.5,208.6 808.0,209.6 809.2,209.4 810.5,210.4 811.8,209.8 813.0,209.5 814.2,210.2 815.5,206.8 816.8,208.6 818.0,211.7 819.2,210.6 820.5,209.1 821.8,209.8 823.0,209.4 824.2,209.6 825.5,209.9 826.8,210.1 828.0,210.1 829.2,211.3 830.5,210.3 831.8,210.7 833.0,209.5 834.2,209.9 835.5,207.1 836.8,208.5 838.0,205.4 839.2,203.1 840.5,203.0 841.8,204.9 843.0,207.3 844.2,207.8 845.5,206.3 846.8,207.4 848.0,204.2 849.2,205.4 850.5,209.0 851.8,210.4 853.0,209.7 854.2,209.8 855.5,209.0 856.8,207.9 858.0,209.9 859.2,210.5 860.5,209.5 861.8,210.0 863.0,208.3 864.2,208.2 865.5,207.2 866.8,207.9 868.0,208.1 869.2,208.0 870.5,209.6 871.8,208.4 873.0,208.0 874.2,204.7 875.5,208.4 876.8,209.0 878.0,204.9 879.2,205.3 880.5,205.0 881.8,206.0 883.0,207.9 884.2,207.1 885.5,207.9 886.8,208.5 888.0,207.2 889.2,207.6 890.5,207.7 891.8,208.1 893.0,208.3 894.2,208.3 895.5,208.2 896.8,203.8 898.0,207.3 899.2,207.7 900.5,209.2 901.8,207.5 903.0,208.9 904.2,208.2 905.5,206.1 906.8,208.5 908.0,208.3 909.2,208.4 910.5,207.0 911.8,206.8 913.0,207.9 914.2,208.2 915.5,207.9 916.8,207.9 918.0,206.7 919.2,208.3 920.5,205.9 921.8,208.4 923.0,207.5 924.2,206.6 925.5,207.2 926.8,207.8 928.0,208.0 929.2,209.2 930.5,208.2 931.8,208.0 933.0,207.0 934.2,204.0 935.5,205.2 936.8,204.4 938.0,205.3 939.2,206.6 940.5,206.7 941.8,208.5 943.0,207.1 944.2,208.8 945.5,204.3 946.8,209.4 948.0,208.7 949.2,208.4 950.5,204.9 951.8,208.5 953.0,204.7 954.2,207.2 955.5,209.0 956.8,203.0 958.0,210.1 959.2,207.5 960.5,208.6 961.8,208.6 963.0,207.5 964.2,207.4 965.5,208.8 966.8,208.8 968.0,205.9 969.2,209.3 970.5,208.4 971.8,207.3 973.0,205.5 974.2,203.4 975.5,204.7 976.8,207.4 978.0,207.3 979.2,204.5 980.5,208.6 981.8,208.6 983.0,208.7 984.2,208.6 985.5,208.7 986.8,208.1 988.0,208.9 989.2,208.0 990.5,208.8 991.8,209.7 993.0,208.3 994.2,208.3 995.5,208.8 996.8,207.4 998.0,203.0 999.2,207.4 1000.5,208.3 1001.8,210.1 1003.0,208.8 1004.2,207.8 1005.5,207.3 1006.8,204.9 1008.0,205.1 1009.2,206.6 1010.5,207.1 1011.8,207.5 1013.0,207.8 1014.2,208.0 1015.5,208.2 1016.8,208.6 1018.0,208.3 1019.2,207.7 1020.5,207.6 1021.8,208.8 1023.0,208.8 1024.2,209.9 1025.5,208.2 1026.8,207.8 1028.0,208.2 1029.2,206.5 1030.5,207.5 1031.8,207.4 1033.0,208.4 1034.2,207.8 1035.5,206.5 1036.8,207.5 1038.0,206.9 1039.2,207.0 1040.5,206.5 1041.8,207.8 1043.0,207.5 1044.2,208.6 1045.5,206.8 1046.8,205.8 1048.0,206.6 1049.2,204.6 1050.5,207.4 1051.8,205.9 1053.0,206.3 1054.2,207.5 1055.5,206.2 1056.8,205.4 1058.0,207.1 1059.2,204.9 1060.5,205.4 1061.8,203.4 1063.0,204.8 1064.2,204.7 1065.5,205.1 1066.8,206.5 1068.0,207.2 1069.2,205.9 1070.5,207.0 1071.8,207.9 1073.0,208.4 1074.2,206.0 1075.5,206.6 1076.8,206.7 1078.0,206.4 1079.2,205.9 1080.5,206.5 1081.8,204.7 1083.0,206.9 1084.2,205.9 1085.5,206.9 1086.8,204.4 1088.0,204.1 1089.2,203.2 1090.5,202.2 1091.8,203.3 1093.0,205.4 1094.2,207.6 1095.5,205.7 1096.8,207.9 1098.0,206.7 1099.2,203.9 1100.5,206.6 1101.8,207.3 1103.0,205.7 1104.2,207.3 1105.5,204.2 1106.8,206.1 1108.0,206.9 1109.2,206.4 1110.5,207.0 1111.8,206.9 1113.0,207.0 1114.2,207.4 1115.5,207.1 1116.8,206.3 1118.0,207.2 1119.2,206.7 1120.5,207.4 1121.8,206.0 1123.0,207.5 1124.2,206.8 1125.5,207.3 1126.8,205.9 1128.0,205.8 1129.2,205.6 1130.5,205.7 1131.8,206.1 1133.0,205.8 1134.2,203.6 1135.5,206.6 1136.8,207.9 1138.0,207.1 1139.2,204.9 1140.5,207.7 1141.8,207.7 1143.0,208.5 1144.2,207.6 1145.5,202.6 1146.8,208.2 1148.0,207.2 1149.2,209.5 1150.5,206.8 1151.8,208.0 1153.0,207.3 1154.2,208.7 1155.5,208.7 1156.8,207.6 1158.0,206.2 1159.2,208.3 1160.5,208.1 1161.8,208.5 1163.0,202.4 1164.2,205.1 1165.5,205.7 1166.8,204.8 1168.0,208.9 1169.2,208.2 1170.5,209.7 1171.8,208.2 1173.0,208.4 1174.2,207.8 1175.5,208.4 1176.8,208.1 1178.0,209.0 1179.2,209.1 1180.5,208.5 1181.8,208.3 1183.0,208.4 1184.2,208.7 1185.5,208.6 1186.8,209.8 1188.0,208.1 1189.2,209.4 1190.5,207.5 1191.8,205.6 1193.0,207.5 1194.2,208.0 1195.5,208.8 1196.8,209.3 1198.0,205.6 1199.2,209.2 1200.5,209.4 1201.8,208.5 1203.0,208.9 1204.2,206.8 1205.5,206.6 1206.8,207.6 1208.0,205.7 1209.2,208.1 1210.5,207.3 1211.8,209.5 1213.0,205.6 1214.2,208.9 1215.5,209.6 1216.8,209.3 1218.0,207.0 1219.2,208.3 1220.5,207.9 1221.8,209.4 1223.0,208.2 1224.2,209.8 1225.5,207.9 1226.8,209.8 1228.0,203.9 1229.2,208.6 1230.5,209.2 1231.8,208.2 1233.0,209.4 1234.2,207.9 1235.5,209.4 1236.8,207.7 1238.0,208.4 1239.2,203.1 1240.5,205.2 1241.8,207.5 1243.0,209.4 1244.2,209.1 1245.5,208.1 1246.8,208.4 1248.0,207.9 1249.2,203.8 1250.5,208.8 1251.8,208.1 1253.0,208.7 1254.2,209.7 1255.5,208.7 1256.8,209.1 1258.0,208.2 1259.2,208.6 1260.5,208.6 1261.8,209.6 1263.0,207.6 1264.2,208.4 1265.5,208.7 1266.8,209.0 1268.0,207.7 1269.2,208.2 1270.5,211.1 1271.8,209.2 1273.0,207.5 1274.2,207.4 1275.5,206.3 1276.8,209.3 1278.0,209.1 1279.2,207.8 1280.5,208.7 1281.8,207.7 1283.0,209.4 1284.2,204.6 1285.5,205.5 1286.8,208.9 1288.0,206.7 1289.2,205.8 1290.5,208.3 1291.8,208.9 1293.0,206.6 1294.2,206.0 1295.5,204.5 1296.8,206.0 1298.0,205.1 1299.2,208.0 1300.5,210.2 1301.8,204.0 1303.0,208.6 1304.2,205.8 1305.5,209.0 1306.8,207.1 1308.0,207.9 1309.2,208.3 1310.5,209.0 1311.8,209.5 1313.0,209.2 1314.2,205.9 1315.5,209.3 1316.8,208.7 1318.0,208.7 1319.2,205.4 1320.5,205.5 1321.8,207.2 1323.0,207.8 1324.2,208.8 1325.5,208.4" fill="none" stroke="#d6dae6" stroke-width="1.2"/><path d="M321 54.5H1277" stroke="#666666" stroke-width="1" stroke-dasharray="1 3"/><path d="M321 87.5H1277" stroke="#666666" stroke-width="1" stroke-dasharray="1 3"/><path d="M321 121.5H1277" stroke="#666666" stroke-width="1" stroke-dasharray="1 3"/><path d="M321 154.5H1277" stroke="#666666" stroke-width="1" stroke-dasharray="1 3"/><path d="M321 187.5H1277" stroke="#666666" stroke-width="1" stroke-dasharray="1 3"/><path d="M321 221.5H1277" stroke="rgba(215,225,255,0.42)" stroke-width="1" stroke-dasharray="1 3"/><path d="M321 254.5H1277" stroke="rgba(215,225,255,0.42)" stroke-width="1" stroke-dasharray="1 3"/><path d="M321 288.5H1277" stroke="rgba(215,225,255,0.42)" stroke-width="1" stroke-dasharray="1 3"/><path d="M321 321.5H1277" stroke="rgba(215,225,255,0.42)" stroke-width="1" stroke-dasharray="1 3"/><path d="M368.3 51V337" stroke="#000" stroke-width="2.4"/><path d="M368.3 51V337" stroke="#fff" stroke-width="1.15" stroke-dasharray="4.3 1.9"/><path d="M377.3 51V337" stroke="#000" stroke-width="2.4"/><path d="M377.3 51V337" stroke="#fff" stroke-width="1.15" stroke-dasharray="4.3 1.9"/></svg>
<span class="t" style="left:272.0px;top:51px;font-size:10px;color:#f2f2f2;">-40 dBm</span>
<span class="t" style="left:1284.2px;top:51px;font-size:10px;color:#f2f2f2;">-40 dBm</span>
<span class="t" style="left:272.0px;top:84px;font-size:10px;color:#f2f2f2;">-50 dBm</span>
<span class="t" style="left:1284.2px;top:84px;font-size:10px;color:#f2f2f2;">-50 dBm</span>
<span class="t" style="left:272.0px;top:118px;font-size:10px;color:#f2f2f2;">-60 dBm</span>
<span class="t" style="left:1284.2px;top:118px;font-size:10px;color:#f2f2f2;">-60 dBm</span>
<span class="t" style="left:272.0px;top:151px;font-size:10px;color:#f2f2f2;">-70 dBm</span>
<span class="t" style="left:1284.2px;top:151px;font-size:10px;color:#f2f2f2;">-70 dBm</span>
<span class="t" style="left:272.0px;top:184px;font-size:10px;color:#f2f2f2;">-80 dBm</span>
<span class="t" style="left:1284.2px;top:184px;font-size:10px;color:#f2f2f2;">-80 dBm</span>
<span class="t" style="left:272.0px;top:218px;font-size:10px;color:#b9c0d6;">-90 dBm</span>
<span class="t" style="left:1284.2px;top:218px;font-size:10px;color:#b9c0d6;">-90 dBm</span>
<span class="t" style="left:272.0px;top:251px;font-size:10px;color:#b9c0d6;">-100 dBm</span>
<span class="t" style="left:1278.6px;top:251px;font-size:10px;color:#b9c0d6;">-100 dBm</span>
<span class="t" style="left:272.0px;top:285px;font-size:10px;color:#b9c0d6;">-110 dBm</span>
<span class="t" style="left:1279.4px;top:285px;font-size:10px;color:#b9c0d6;">-110 dBm</span>
<span class="t" style="left:272.0px;top:318px;font-size:10px;color:#b9c0d6;">-120 dBm</span>
<span class="t" style="left:1278.6px;top:318px;font-size:10px;color:#b9c0d6;">-120 dBm</span>
<div class="r" style="left:268px;top:337px;width:1058px;height:11px;background:linear-gradient(#7a7a7a 0%,#636363 12%,#565656 40%,#424242 75%,#363636 100%);"></div>
<div class="r" style="left:268px;top:348px;width:1058px;height:10px;background:#000;"></div>
<svg width="1366" height="360" shape-rendering="crispEdges"><rect x="274" y="338" width="2" height="3" fill="#8e8e8e"/><rect x="290" y="338" width="2" height="2" fill="#848484" opacity="0.8"/><rect x="306" y="338" width="2" height="4" fill="#8e8e8e"/><rect x="322" y="338" width="2" height="2" fill="#848484" opacity="0.8"/><rect x="338" y="338" width="2" height="3" fill="#8e8e8e"/><rect x="354" y="338" width="2" height="2" fill="#848484" opacity="0.8"/><rect x="371" y="338" width="2" height="3" fill="#8e8e8e"/><rect x="387" y="338" width="2" height="2" fill="#848484" opacity="0.8"/><rect x="403" y="338" width="2" height="3" fill="#8e8e8e"/><rect x="419" y="338" width="2" height="2" fill="#848484" opacity="0.8"/><rect x="435" y="338" width="2" height="3" fill="#8e8e8e"/><rect x="451" y="338" width="2" height="2" fill="#848484" opacity="0.8"/><rect x="467" y="338" width="2" height="4" fill="#8e8e8e"/><rect x="483" y="338" width="2" height="2" fill="#848484" opacity="0.8"/><rect x="500" y="338" width="2" height="3" fill="#8e8e8e"/><rect x="516" y="338" width="2" height="2" fill="#848484" opacity="0.8"/><rect x="532" y="338" width="2" height="3" fill="#8e8e8e"/><rect x="548" y="338" width="2" height="2" fill="#848484" opacity="0.8"/><rect x="564" y="338" width="2" height="3" fill="#8e8e8e"/><rect x="580" y="338" width="2" height="2" fill="#848484" opacity="0.8"/><rect x="596" y="338" width="2" height="3" fill="#8e8e8e"/><rect x="612" y="338" width="2" height="2" fill="#848484" opacity="0.8"/><rect x="629" y="338" width="2" height="4" fill="#8e8e8e"/><rect x="645" y="338" width="2" height="2" fill="#848484" opacity="0.8"/><rect x="661" y="338" width="2" height="3" fill="#8e8e8e"/><rect x="677" y="338" width="2" height="2" fill="#848484" opacity="0.8"/><rect x="693" y="338" width="2" height="3" fill="#8e8e8e"/><rect x="709" y="338" width="2" height="2" fill="#848484" opacity="0.8"/><rect x="725" y="338" width="2" height="3" fill="#8e8e8e"/><rect x="742" y="338" width="2" height="2" fill="#848484" opacity="0.8"/><rect x="758" y="338" width="2" height="3" fill="#8e8e8e"/><rect x="774" y="338" width="2" height="2" fill="#848484" opacity="0.8"/><rect x="790" y="338" width="2" height="4" fill="#8e8e8e"/><rect x="806" y="338" width="2" height="2" fill="#848484" opacity="0.8"/><rect x="822" y="338" width="2" height="3" fill="#8e8e8e"/><rect x="838" y="338" width="2" height="2" fill="#848484" opacity="0.8"/><rect x="854" y="338" width="2" height="3" fill="#8e8e8e"/><rect x="871" y="338" width="2" height="2" fill="#848484" opacity="0.8"/><rect x="887" y="338" width="2" height="3" fill="#8e8e8e"/><rect x="903" y="338" width="2" height="2" fill="#848484" opacity="0.8"/><rect x="919" y="338" width="2" height="3" fill="#8e8e8e"/><rect x="935" y="338" width="2" height="2" fill="#848484" opacity="0.8"/><rect x="951" y="338" width="2" height="4" fill="#8e8e8e"/><rect x="967" y="338" width="2" height="2" fill="#848484" opacity="0.8"/><rect x="983" y="338" width="2" height="3" fill="#8e8e8e"/><rect x="1000" y="338" width="2" height="2" fill="#848484" opacity="0.8"/><rect x="1016" y="338" width="2" height="3" fill="#8e8e8e"/><rect x="1032" y="338" width="2" height="2" fill="#848484" opacity="0.8"/><rect x="1048" y="338" width="2" height="3" fill="#8e8e8e"/><rect x="1064" y="338" width="2" height="2" fill="#848484" opacity="0.8"/><rect x="1080" y="338" width="2" height="3" fill="#8e8e8e"/><rect x="1096" y="338" width="2" height="2" fill="#848484" opacity="0.8"/><rect x="1113" y="338" width="2" height="4" fill="#8e8e8e"/><rect x="1129" y="338" width="2" height="2" fill="#848484" opacity="0.8"/><rect x="1145" y="338" width="2" height="3" fill="#8e8e8e"/><rect x="1161" y="338" width="2" height="2" fill="#848484" opacity="0.8"/><rect x="1177" y="338" width="2" height="3" fill="#8e8e8e"/><rect x="1193" y="338" width="2" height="2" fill="#848484" opacity="0.8"/><rect x="1209" y="338" width="2" height="3" fill="#8e8e8e"/><rect x="1225" y="338" width="2" height="2" fill="#848484" opacity="0.8"/><rect x="1242" y="338" width="2" height="3" fill="#8e8e8e"/><rect x="1258" y="338" width="2" height="2" fill="#848484" opacity="0.8"/><rect x="1274" y="338" width="2" height="4" fill="#8e8e8e"/><rect x="1290" y="338" width="2" height="2" fill="#848484" opacity="0.8"/><rect x="1306" y="338" width="2" height="3" fill="#8e8e8e"/><rect x="1322" y="338" width="2" height="2" fill="#848484" opacity="0.8"/></svg>
<span class="t" style="left:292.6px;top:346px;font-size:9.4px;color:#f4f4f4;">79.850</span>
<span class="t" style="left:453.9px;top:346px;font-size:9.4px;color:#f4f4f4;">79.900</span>
<span class="t" style="left:615.2px;top:346px;font-size:9.4px;color:#f4f4f4;">79.950</span>
<span class="t" style="left:776.5px;top:346px;font-size:9.4px;color:#f4f4f4;">80.000</span>
<span class="t" style="left:937.8px;top:346px;font-size:9.4px;color:#f4f4f4;">80.050</span>
<span class="t" style="left:1099.1px;top:346px;font-size:9.4px;color:#f4f4f4;">80.100</span>
<span class="t" style="left:1260.4px;top:346px;font-size:9.4px;color:#f4f4f4;">80.150</span>
<div class="r" style="left:326px;top:56px;width:263px;height:103px;background:linear-gradient(rgba(0,0,0,1) 0%,rgba(0,0,0,1) 47%,rgba(0,0,0,0.72) 52%,rgba(0,0,0,0.72) 100%);border:1.5px solid #1e1e1e;box-sizing:border-box;"></div>
<svg width="700" height="200"><path d="M350.7 107.5A315.8 315.8 0 0 1 428.0 90.4" fill="none" stroke="#f4f4f4" stroke-width="2.8"/><path d="M433.2 89.9A315.8 315.8 0 0 1 481.0 89.9" fill="none" stroke="#f4f4f4" stroke-width="2.8"/><path d="M487.0 90.4A315.8 315.8 0 0 1 563.9 107.5" fill="none" stroke="#f4f4f4" stroke-width="2.8"/><path d="M351.1 108.7L346.8 96.7" stroke="#e6e6e6" stroke-width="2"/><path d="M365.8 103.8L363.4 96.0" stroke="#e6e6e6" stroke-width="1"/><path d="M380.7 99.7L377.9 88.3" stroke="#e6e6e6" stroke-width="1.6"/><path d="M395.8 96.3L394.2 88.2" stroke="#e6e6e6" stroke-width="1"/><path d="M411.0 93.6L409.3 82.0" stroke="#e6e6e6" stroke-width="1.6"/><path d="M426.4 91.7L425.6 83.6" stroke="#e6e6e6" stroke-width="1"/><path d="M441.8 90.6L441.3 78.9" stroke="#e6e6e6" stroke-width="1.6"/><path d="M457.3 90.2L457.3 82.0" stroke="#e6e6e6" stroke-width="1"/><path d="M472.8 90.6L473.3 78.9" stroke="#e6e6e6" stroke-width="1.6"/><path d="M488.2 91.7L489.0 83.6" stroke="#e6e6e6" stroke-width="1"/><path d="M503.6 93.6L505.3 82.0" stroke="#e6e6e6" stroke-width="1.6"/><path d="M518.8 96.3L520.4 88.2" stroke="#e6e6e6" stroke-width="1"/><path d="M533.9 99.7L536.7 88.3" stroke="#e6e6e6" stroke-width="1.6"/><path d="M548.8 103.8L551.2 96.0" stroke="#e6e6e6" stroke-width="1"/><path d="M563.5 108.7L567.8 96.7" stroke="#e6e6e6" stroke-width="2"/><path d="M429.2 75.3L437.2 160" stroke="#8c8c8c" stroke-width="1"/><path d="M486 69.6L477.8 160" stroke="#ee1010" stroke-width="1.5"/><defs><radialGradient id="vb" cx="0.5" cy="0.5" r="0.55" gradientTransform="translate(0.5 0.5) scale(1 0.55) translate(-0.5 -0.5)"><stop offset="0" stop-color="#dcf03c"/><stop offset="0.6" stop-color="#c0d838"/><stop offset="1" stop-color="#a4bc38"/></radialGradient></defs><rect x="430" y="128" width="54.6" height="19" rx="3" fill="url(#vb)"/></svg>
<span class="t" style="left:337.4px;top:84px;font-size:10.5px;color:#e4e4f4;font-style:italic;">-140</span>
<span class="t" style="left:367.0px;top:75px;font-size:10.5px;color:#e4e4f4;font-style:italic;">-120</span>
<span class="t" style="left:399.5px;top:68px;font-size:10.5px;color:#e4e4f4;font-style:italic;">-100</span>
<span class="t" style="left:434.2px;top:65px;font-size:10.5px;color:#e4e4f4;font-style:italic;">-80</span>
<span class="t" style="left:466.7px;top:65px;font-size:10.5px;color:#e4e4f4;font-style:italic;">-60</span>
<span class="t" style="left:498.4px;top:68px;font-size:10.5px;color:#e4e4f4;font-style:italic;">-40</span>
<span class="t" style="left:529.4px;top:75px;font-size:10.5px;color:#e4e4f4;font-style:italic;">-20</span>
<span class="t" style="left:565.1px;top:84px;font-size:10.5px;color:#e4e4f4;font-style:italic;">0</span>
<span class="t" style="left:333.3px;top:59px;font-size:13px;color:#eeeef8;letter-spacing:-0.244px;">dBm</span>
<span class="t" style="left:443.1px;top:132px;font-size:12.5px;color:#0a0a00;font-weight:bold;">-52.7</span>
<svg width="1366" height="360"><defs><linearGradient id="mg" gradientUnits="userSpaceOnUse" x1="0" y1="108" x2="0" y2="337"><stop offset="0.000" stop-color="#50d050" stop-opacity="0.6"/><stop offset="0.424" stop-color="#50c858" stop-opacity="0.55"/><stop offset="0.493" stop-color="#48a850" stop-opacity="0.45"/><stop offset="0.590" stop-color="#40806c" stop-opacity="0.55"/><stop offset="0.659" stop-color="#446a90" stop-opacity="0.5"/><stop offset="0.738" stop-color="#3c4c8c" stop-opacity="0.5"/><stop offset="0.742" stop-color="#3c3c4c" stop-opacity="0.8"/><stop offset="0.786" stop-color="#3c3c4c" stop-opacity="0.8"/><stop offset="0.790" stop-color="#34407c" stop-opacity="0.6"/><stop offset="0.860" stop-color="#34407c" stop-opacity="0.6"/><stop offset="0.865" stop-color="#2c2c38" stop-opacity="0.85"/><stop offset="0.969" stop-color="#1c1c24" stop-opacity="0.85"/></linearGradient><clipPath id="mc"><polygon points="785.5,210.1 786.8,210.1 788.0,210.6 789.2,210.9 790.5,210.1 791.8,209.7 793.0,208.8 793.5,208.5 794.0,206.7 794.5,205.7 795.0,201.1 795.5,201.8 796.0,198.8 796.5,196.0 797.0,190.3 797.5,185.1 798.0,177.3 798.5,161.9 799.0,144.2 799.5,127.4 800.0,123.4 800.5,144.1 801.0,161.2 801.5,173.5 802.0,182.9 802.5,189.3 803.0,194.3 803.5,198.6 804.0,201.9 804.5,203.6 805.0,206.0 805.5,206.6 806.0,204.2 806.5,208.2 807.0,209.7 807.5,208.6 808.0,209.6 809.2,209.4 810.5,210.4 811.8,209.8 812,337 785,337"/></clipPath></defs><rect x="792" y="108" width="10.2" height="229" fill="url(#mg)" clip-path="url(#mc)"/><path d="M799.800 110V190" stroke="#74d674" stroke-width="1.200"/><path d="M792.5 51V337M801.7 51V337" stroke="#48cc48" stroke-width="1"/><rect x="792" y="52.8" width="10.2" height="6.4" fill="#2cc03c"/><rect x="794" y="52.8" width="6.2" height="6.4" fill="#48dc58"/><rect x="792" y="330.8" width="10.2" height="5" fill="#38c048"/><rect x="793" y="87.6" width="8.4" height="2.2" fill="#22b832"/><rect x="789.1" y="61.7" width="15.9" height="16.3" rx="3.2" fill="#085808"/></svg>
<span class="t" style="left:794.6px;top:66px;font-size:9.5px;color:#fff;">1</span>
<div class="r" style="left:393px;top:228.5px;width:108px;height:34.5px;background:#181b2e;border-radius:3px;"></div>
<span class="t mono" style="left:402.5px;top:239px;font-size:14.6px;color:#fff;">79.868.950</span>
<div class="r" style="left:1020px;top:57px;width:60px;height:24px;background:#410101;border:1px solid #5a2424;box-sizing:border-box;"></div>
<span class="t" style="left:1030.3px;top:63px;font-size:12px;color:#decccc;letter-spacing:-0.128px;">Scale...</span>
<div class="r" style="left:1080px;top:57px;width:60px;height:24px;background:#410101;border:1px solid #5a2424;box-sizing:border-box;"></div>
<span class="t" style="left:1098.6px;top:63px;font-size:12px;color:#decccc;letter-spacing:0.329px;">Low</span>
<div class="r" style="left:1140px;top:57px;width:60px;height:24px;background:#410101;border:1px solid #5a2424;box-sizing:border-box;"></div>
<span class="t" style="left:1156.5px;top:63px;font-size:12px;color:#decccc;letter-spacing:0.53px;">High</span>
<div class="r" style="left:1200px;top:57px;width:60px;height:24px;background:#410101;border:1px solid #5a2424;box-sizing:border-box;"></div>
<div class="r" style="left:1260px;top:57px;width:60px;height:24px;background:#410101;border:1px solid #5a2424;box-sizing:border-box;"></div>
<span class="t" style="left:1273.0px;top:63px;font-size:12px;color:#decccc;letter-spacing:0.706px;">Zoom</span>
<svg width="1366" height="100"><path d="M1229.800 63v12.700" stroke="#decccc" stroke-width="1"/><path d="M1221 68.600h5M1234 68.600h5" stroke="#decccc" stroke-width="1"/><path d="M1216 66.200l5.200 2.400-5.200 2.400zM1244 66.200l-5.200 2.400 5.200 2.400z" fill="#decccc"/></svg>
<div class="r" style="left:264px;top:358px;width:1063px;height:6px;background:#f0f0f0;"></div>
<div class="r" style="left:268px;top:358px;width:1058px;height:1px;background:#fff;"></div>
<div class="r" style="left:268px;top:364px;width:1058px;height:330px;background:#fff;"></div>
<svg width="1058" height="330" style="left:268px;top:364px;overflow:hidden" shape-rendering="crispEdges"><defs><g id="wt" stroke-width="1" fill="none"><path stroke="#ebefff" d="M231 286v1M231 260v2M97 94v2M243 322v2M95 48v1M155 72v1M21 304v1M231 315v2M80 319v1M32 30v1M97 123v2M15 237v1M225 302v1M119 327v1M255 2v2M43 234v2M142 208v2M42 130v1M117 262v1M15 35v2M55 205v1M148 197v1M8 0v1M107 26v1M192 203v1M37 289v2M101 138v1M44 159v1M7 209v1M68 126v2M51 5v1M238 249v1M96 229v2M97 67v1M196 59v1M215 108v1M138 303v1M10 107v1M201 308v2M51 21v1M109 226v1M4 312v1M151 197v1M38 46v1M124 7v2M188 190v2M232 65v2M247 294v1M197 93v2M78 159v1M127 97v1M100 198v1M40 215v1M53 55v1M262 130v1M200 131v1M251 150v2M89 35v1M116 245v2M37 143v1M104 8v1M137 210v1M127 30v1M90 144v1M67 47v1M70 230v1M71 302v1M9 243v1M159 17v1M38 246v1M159 163v1M37 38v1M188 22v2M66 174v1M43 242v1M213 15v1M7 319v2M195 194v2M6 311v1M41 46v2M59 131v1M169 198v2M234 225v1M42 265v2M15 158v2M44 246v1M117 57v1M248 130v1M188 154v1M103 265v1M175 226v1M123 167v1M128 101v2M220 102v1M196 112v2M162 107v1M68 254v1M20 32v1M86 57v1M241 140v1M211 195v2M252 161v2M231 164v1M16 142v2M21 143v2M181 158v2M9 328v1M207 232v1M12 136v1M72 24v2M59 228v1M188 39v2M101 102v1M131 91v2M5 241v2M18 91v1M139 177v2M256 314v1M201 114v1M210 198v1M230 232v1M3 192v2M257 175v1M167 104v1M63 109v1M199 44v1M164 134v2M8 178v2M42 19v1M175 281v1M140 249v1M111 32v1M17 88v2M171 71v1M76 264v2M225 252v2M44 113v1M148 287v2M84 267v2M131 159v2M195 312v1M155 72v2M139 293v1M102 210v2M58 257v1M193 14v2M22 264v1M62 251v1M85 33v2M234 211v1M137 126v1M252 65v1M222 243v2M162 55v1M214 316v1M133 66v2M11 18v1M79 116v1M145 164v2M181 125v2M255 53v1M62 261v2M128 101v2M223 11v1M211 271v2M81 275v1M111 271v1M69 119v2M177 92v1M161 99v1M99 49v1M122 67v2M45 132v1M49 222v1M64 102v1M9 49v1M183 184v1M258 324v1M257 96v1M246 54v1M19 282v2M263 291v1M75 97v1M58 104v1M80 144v2M48 296v1M68 236v1M49 167v1M239 218v2M181 220v1M191 6v2M20 102v1M208 232v1M189 207v1M84 48v2M7 165v1M207 291v2M97 258v2M174 132v1M59 81v1M68 168v2M189 221v1M207 105v2M94 36v1M154 240v1M5 182v2M25 118v1M153 172v1M207 291v1M39 199v2M254 328v1M61 202v2M11 58v2M55 121v1M227 205v2M25 100v2M192 5v1M132 128v1M174 281v2M260 212v2M51 326v1M39 281v2M23 197v1M197 241v1M253 277v2M29 219v1M215 145v2M204 306v1M187 271v1M247 138v2M145 151v1M7 125v2M21 324v1M209 199v1M161 203v1M163 37v1M219 244v1M124 23v2M50 239v1M125 309v2M58 25v2M213 233v1M104 26v1M79 63v1M226 71v2M213 233v2M134 327v2M214 186v2M70 148v2M65 122v1M58 257v1M259 319v1M140 139v2M97 324v1M122 97v1M257 100v2M20 321v1M4 138v1M217 13v2M19 52v1M142 37v1M82 281v1M191 247v1M181 107v1M175 253v2M68 38v1M229 319v1M227 217v2M132 199v1M188 78v2M166 148v2M94 218v2M189 297v1M236 165v1M42 221v2M248 237v1M4 38v1M109 309v1M155 253v2M167 144v1M112 183v2M167 187v1M165 225v2M142 224v2M156 234v1M113 204v2M264 127v1M185 187v1M186 202v2M198 99v2M188 199v2M79 302v2M90 90v1M232 144v1M113 264v1M81 290v1M11 216v1M156 279v1M171 41v1M53 160v1M13 324v2M73 49v2M216 125v2M112 250v2M173 235v1M179 172v1M69 252v1M37 316v1M210 178v1M193 45v1M12 268v1M5 56v1M215 74v1M83 325v1M85 164v1M199 217v2M149 140v1M241 157v2M58 155v2M79 91v1M234 8v2M246 18v1M55 101v1M183 111v2M120 307v2M241 304v2M114 226v1M143 206v1M159 320v2M245 133v1M206 175v2M47 247v1M204 25v1M68 197v2M264 140v1M121 5v1M190 230v1M215 310v1M212 80v1M74 132v2M67 326v2M136 264v2M27 77v2M91 0v1M76 65v1M180 138v2M49 245v2M239 42v2M259 155v1M96 213v1M46 225v1M19 278v1M253 80v1M161 159v1M38 284v1M239 34v1M38 71v1M201 236v2M62 227v1M193 243v1M150 288v1M234 5v2M105 315v1M148 321v1M152 172v1M44 131v1M102 192v2M56 168v1M140 288v1M169 228v1M47 52v1M48 67v2M91 92v1M205 18v1M46 51v1M16 80v1M222 208v1M174 218v2M71 105v1M197 247v1M211 318v1M205 313v2M162 125v2M9 133v1M96 175v1M225 54v2M193 104v2M170 150v1M81 129v2M152 280v1M180 313v2M262 72v2M101 264v2M100 290v1M101 42v1M125 244v2M213 170v1M46 184v1M237 63v1M69 122v2M32 286v1M86 171v2M74 62v1M147 186v1M185 84v1M39 232v1M206 92v2M70 157v2M195 314v2M8 81v1M210 239v1M73 270v1M60 291v1M88 172v2M67 134v1M170 27v2M19 74v1M254 307v1M240 176v1M208 144v1M237 209v1M60 289v1M169 268v2M221 215v1M164 27v1M221 192v2M164 156v2M35 125v1M228 124v2M203 26v1M53 269v1M156 202v1M35 188v2M215 288v1M113 215v2M62 36v1M66 63v2M232 0v1M124 153v1M166 88v1M225 230v2M203 72v1M118 23v1M15 232v1M157 166v1M73 241v1M103 151v2M30 100v1M181 241v1M88 325v2M103 272v2M120 98v1M54 156v2M160 140v1M69 171v2M227 212v1M86 114v1M61 100v1M92 120v2M151 139v1M59 302v2M117 154v1M115 141v1M46 236v1M225 270v1M23 3v2M145 275v1M216 291v1M84 145v1M125 91v1M14 95v1M17 318v1M196 1v1M30 92v1M184 164v2M247 16v2M149 258v2M89 304v1M57 311v1M120 225v2M131 120v1M250 278v1M255 133v1M103 305v2M26 293v1M92 166v1M9 311v1M222 257v1M134 15v1M58 91v2M121 319v1M27 159v1M21 160v2M135 301v1M45 261v1M193 130v1M81 254v2M232 31v1M210 239v1M110 21v1M250 307v1M74 233v2M20 1v1M209 269v1M46 201v2M152 241v1M39 17v2M117 151v1M60 282v1M214 236v1M116 186v1M172 312v1M20 82v1M29 175v2M90 236v1M109 195v1M25 110v1M177 126v1M83 245v1M204 109v2M239 157v1M228 250v2M92 249v1M196 214v1M24 141v1M140 317v1M93 134v2M201 290v2M111 137v1M184 29v1M184 70v1M61 10v1M196 230v1M195 166v1M28 154v1M122 250v1M96 77v2M65 16v1M159 210v1M245 278v2M69 264v2M133 160v2M231 193v1M104 143v2M230 207v1M197 264v1M115 52v1M189 176v2M110 71v1M12 322v1M5 152v2M34 110v2M180 62v1M120 323v1M46 218v1M200 252v1M250 196v1M145 254v2M143 113v1M206 103v1M85 179v2M122 266v1M175 216v1M244 298v1M157 11v1M61 186v1M207 139v1M193 253v2M153 240v2M166 129v1M12 18v1M165 191v2M152 134v2M95 328v1M196 315v1M185 15v2M110 38v2M24 317v2M210 313v1M32 141v1M237 230v1M197 19v1M259 139v1M253 184v1M10 76v2M98 138v1M132 112v1M0 278v1M1 122v2M252 280v1M170 135v1M53 9v1M106 202v2M80 98v1M81 170v2M251 288v1M189 212v1M187 273v1M121 127v1M166 91v2M64 32v1M52 158v1M231 262v2M246 20v1M211 246v1M176 129v1M259 200v1M128 188v2M167 93v1M104 288v1M215 328v2M64 318v2M137 82v1M102 192v2M149 118v2M94 7v1M68 137v2M138 214v1M203 197v2M71 24v1M60 21v1M146 182v2M61 207v1M13 277v1M87 191v1M158 224v2M145 114v1M208 72v2M199 110v2M144 75v1M89 54v2M128 249v1M61 77v1M9 138v2M73 140v2M204 140v1M116 41v1M102 187v2M132 286v1M77 32v1M158 40v1M93 172v1M71 103v1M247 16v1M179 286v1M29 110v2M129 141v1M148 127v1M24 90v1M86 275v1M38 138v1M12 284v1M32 263v1M5 107v1M186 5v2M135 125v2M253 204v1M51 246v1M209 128v2M12 4v2M72 116v1M198 189v2M141 186v2M230 181v1M142 34v2M164 304v1M135 171v1M92 108v1M66 279v1M105 90v1M54 79v1M190 179v1M220 11v1M204 257v1M206 48v1M104 10v1M164 34v2M55 296v1M220 242v1M255 209v2M91 139v1M199 164v1M182 268v1M75 324v2M193 329v1M108 315v2M176 225v2M217 258v2M58 62v2M232 223v2M239 214v1M256 117v1M21 263v1M231 228v1M23 304v1M166 77v2M239 168v1M160 96v2M240 282v1M26 64v1M56 119v1M72 58v1M261 128v1M33 94v1M175 128v2M178 232v1M7 218v1M250 143v2M122 37v1M225 251v1M36 254v1M33 77v1M91 51v1M18 177v1M147 60v1M93 314v1M15 315v1M250 36v1M105 272v2M161 100v2M220 193v1M173 161v2M142 308v1M107 92v1M87 297v1M21 66v1M59 132v1M183 157v1M4 35v2M105 184v1M209 102v1M36 323v1M217 191v2M209 142v1M68 259v1M48 177v2M213 120v1M60 145v1M146 40v2M232 115v1M198 101v2M211 307v1M229 327v1M187 214v1M144 299v1M137 149v2M6 312v1M7 210v1M67 303v1M198 215v1M174 52v2M53 279v2M50 232v1M45 186v1M191 15v2M176 11v2M79 240v1M185 87v1M258 161v1M31 113v1M202 221v1M56 29v1M236 205v2M111 265v2M107 254v1M73 263v1M49 42v1M85 318v2M129 242v1M221 239v1M8 189v1M12 55v1M211 274v2M56 48v1M259 288v1M34 290v1M66 45v2M262 157v1M180 125v1M211 238v1M111 301v1M87 285v1M235 70v1M257 79v1M88 208v2M60 211v1M117 78v1M192 80v1M14 207v1M252 153v2M23 199v1M153 40v1M133 274v1M214 168v1M104 286v1M256 49v1M153 136v2M132 112v1M43 219v1M196 183v2M220 170v1M59 25v1M31 83v2M195 280v1M204 114v2M50 190v1M160 184v1M117 266v2M249 4v1M208 303v1M3 303v1M126 187v2M188 154v1M28 161v1M254 60v2M176 27v1M109 129v2M138 217v2M191 205v1M146 292v2M49 43v1M115 128v1M16 162v1M79 146v2M144 29v1M24 202v2M42 282v1M174 327v2M11 315v2M108 296v2M2 245v1M171 320v1M88 42v1M71 193v1M223 60v1M163 36v1M182 280v2M57 60v1M158 286v1M108 49v1M165 274v1M63 79v1M241 208v1M221 193v1M253 252v1M198 261v1M53 281v2M85 299v1M103 7v1M83 179v1M198 231v2M236 183v2M75 246v2M202 167v1M250 119v2M133 179v2M210 294v1M131 32v1M193 124v2M109 221v2M33 286v1M211 271v1M198 249v1M118 95v2M52 156v2M76 17v2M180 290v1M250 170v1M77 228v1M154 50v1M79 111v1M176 61v1M97 298v1M188 166v1M55 148v2M135 56v1M183 10v1M129 150v1M129 287v1M134 248v1M139 14v1M142 260v1M199 81v2M67 312v1M83 273v2M133 156v1M218 185v2M119 246v1M189 176v2M110 327v2M138 289v2M178 118v1M56 294v2M36 154v1M52 289v1M99 188v1M181 72v1M34 72v1M211 292v1M39 223v2M94 44v2M181 313v1M101 52v1M71 248v1M40 249v1M45 69v1M131 171v1M139 77v2M79 218v1M250 302v2M161 86v1M80 16v1M57 152v1M12 212v1M76 95v2M42 0v1M34 110v1M118 208v1M171 112v1M200 7v1M134 24v2M189 269v2M171 266v2M180 232v2M120 212v1M102 76v1M129 231v1M113 170v1M121 312v1M130 293v1M94 159v1M33 154v2M168 104v2M17 126v2M47 40v2M257 125v1M111 22v1M70 189v2M182 35v1M198 69v1M119 173v1M194 146v2M34 243v1M26 255v1M194 33v1M81 73v1M105 81v1M115 163v1M70 69v1M163 21v1M121 69v2M121 232v1M190 61v1M74 36v1M177 25v1M157 164v1M62 140v2M226 269v1M47 41v2M114 8v1M158 257v1M82 169v2M53 150v1M235 179v2M250 238v1M97 75v1M12 224v2M205 278v1M144 83v1M88 205v2M108 10v1M112 217v1M32 238v1M93 175v1M85 155v1M172 133v2M189 242v1M162 85v1M73 296v2M213 219v2M235 131v1M251 119v2M83 239v2M147 87v2M160 120v2M206 80v2M173 145v2M49 324v2M1 177v1M57 254v2M263 194v2M0 254v1M137 254v2M236 28v1M163 254v2M246 31v2M73 13v1M226 25v1M143 25v1M204 21v1M99 324v2M52 218v1M29 37v1M246 77v1M161 257v2M175 100v2M110 228v1M65 126v2M140 152v1M60 243v1M124 22v1M262 175v1M204 329v1M81 56v1M147 199v1M130 95v2M133 318v2M64 29v1M208 201v1M135 252v2M251 115v1M180 20v1M82 255v1M118 316v1M78 264v1M161 238v1M95 13v2M136 52v1M168 27v1M148 272v2M155 237v1M170 55v1M111 267v1M33 18v1M25 242v2M127 147v1M186 123v1M167 203v1M173 26v1M151 269v2M212 110v1M120 242v1M62 219v1M243 212v2M256 128v2M214 6v2M44 96v1M29 314v1M94 282v1M163 137v2M21 29v1M31 221v1M243 99v1M28 281v1M1 137v1M224 65v1M255 293v2M125 206v2M122 315v1M23 44v2M65 125v1M242 206v1M196 37v2M200 239v2M54 106v1M249 300v1M61 171v1M11 113v2M260 295v1M204 98v1M17 47v2M137 229v1M187 223v1M231 222v1M108 319v1M210 155v2M45 233v2M242 320v2M232 192v2M258 205v2M38 116v1M117 309v2M232 222v1M152 115v2M43 276v2M174 288v2M200 8v1M176 218v1M46 314v1M113 203v1M100 222v1M255 298v1M110 200v1M173 186v2M244 128v1M208 278v1M12 69v2M166 260v1M140 290v1M253 167v1M253 249v1M215 74v1M24 235v1M225 291v1M148 180v1M26 38v1M153 279v2M86 186v1M194 140v1M183 296v2M262 12v2M191 203v2M207 76v1M127 105v1M13 60v1M13 97v1M10 250v1M14 149v1M108 319v2M185 164v1M111 242v2M160 14v1M144 311v2M183 114v2M114 308v2M163 76v2M174 225v1M89 93v2M87 242v1M178 110v1M115 245v1M30 117v1M24 32v2M12 48v1M22 303v1M251 307v2M197 32v1M213 10v2M90 283v1M22 78v2M165 27v1M147 113v2M10 182v1M184 1v1M149 153v1M7 8v1M158 213v2M88 137v1M57 83v1M240 262v1M159 279v2M227 256v1M211 199v1M258 135v1M227 270v2M114 145v1M151 154v1M16 20v2M233 146v2M97 188v2M236 190v2M232 46v1M256 283v1M99 38v1M126 273v1M218 263v2M158 19v1M264 182v1M57 6v1M199 327v1M229 287v1M28 298v2M88 35v1M124 255v1M228 278v1M9 6v1M109 309v1M124 159v1M90 286v2M51 326v1M134 96v2M114 84v1M176 17v2M71 103v2M15 83v1M164 132v2M94 163v2M58 314v1M22 288v1M196 129v1M94 212v1M18 122v2M142 138v1M42 33v1M95 121v1M148 61v2M196 163v1M3 30v1M251 301v1M62 271v1"/><path stroke="#ffffb4" d="M24 59v1M184 311v1M168 199v1M92 104v2M5 255v2M122 229v1M248 21v1M17 66v1M196 239v1M223 317v1M83 186v2M26 179v1M75 141v1M19 14v1M195 74v1M23 71v1M19 303v1M117 146v1M97 230v1M223 102v1M86 36v1M192 209v1M193 290v2M260 49v1M2 242v1M20 314v1M99 171v1M216 300v1M148 277v1M67 82v1M190 55v2M20 135v1M152 149v1M50 329v1M201 174v1M57 285v1M212 185v2M142 119v1M138 292v1M132 206v1M46 67v2M31 222v2M143 106v1M199 98v1M229 15v1M95 187v2M97 277v1M101 194v2M173 0v1M0 1v2M168 328v1M240 259v2M13 33v1M119 246v1M237 242v2M215 137v1M203 123v1M237 275v2M77 103v1M82 18v1M211 93v2M99 293v2M183 29v1M50 18v1M235 131v2M130 280v1M190 57v1M13 243v1M51 15v2M82 32v1M178 65v1M176 61v1M190 218v2M123 27v2M167 146v1M146 324v1M239 108v1M225 243v1M246 307v2M80 261v1M30 275v1M184 310v1M49 148v1M233 311v2M215 143v1M247 203v2M245 182v1M60 23v2M204 273v1M77 227v1M216 50v2M117 75v1M151 159v1M196 109v2M5 1v1M247 72v1M83 69v1M32 290v2M79 109v1M228 93v2M26 144v1M171 73v1M38 55v2M19 170v1M205 105v1M91 240v1M154 157v1M106 329v1M214 80v1M92 164v1M213 20v2M122 71v2M263 279v1M127 87v2M264 162v1M134 124v1M215 114v1M32 60v2M48 118v1M124 215v1M248 186v1M188 39v1M115 310v2M126 65v1M258 306v2M221 208v1M191 210v1M63 128v1M238 180v2M137 78v1M197 329v1M128 196v1M51 88v1M193 325v1M72 326v2M42 273v1M250 115v1M34 180v2M242 103v1M217 142v1M245 15v1M166 254v1M6 61v1M39 42v2M7 123v1M239 306v1M163 163v1M264 215v1M181 132v1M184 318v2M63 64v1M46 90v2M49 257v1M91 210v2M80 153v1M151 150v1M232 18v1M67 160v2M61 80v2M211 263v2M227 47v1M24 82v1M58 224v1M238 86v2M143 321v2M169 53v1M214 0v1M193 47v1M35 178v1M93 211v1M104 219v1M21 131v1M238 54v2M70 305v1M250 1v1M194 320v1M243 225v1M253 299v1M61 187v1M218 118v1M2 242v1M180 46v1M145 275v1M223 233v1M239 189v1M258 167v2M74 78v1M198 288v1M16 281v1M217 114v1M15 41v1M114 188v1M159 70v1M195 172v1M94 53v1M7 227v1M95 42v1M96 193v1M240 46v2M155 22v1M250 181v1M241 51v1M32 152v2M175 271v1M87 168v1M114 62v1M154 226v1M163 104v1M212 261v1M25 151v1M149 214v1M39 304v1M36 210v1M206 306v1M224 116v1M32 26v1M211 138v2M149 204v2M148 188v1M233 23v1M251 193v1M138 318v1M3 151v1M80 58v1M15 246v2M10 14v1M3 227v2M83 12v1M51 205v2M252 49v1M197 138v2M199 72v2M153 236v2M264 26v2M25 306v1M67 192v1M84 288v1M73 250v1M157 220v1M168 115v2M193 140v1M209 236v2M31 301v2M39 17v1M245 127v1M87 53v2M195 236v1M228 64v1M256 56v1M170 196v1M263 242v2M222 68v2M159 9v2M116 125v1M235 329v1M178 150v1M9 66v1M107 21v2M121 51v1M60 41v1M52 227v1M241 65v2M179 260v1M166 327v1M75 131v1M89 115v2M59 19v2M209 171v2M38 30v1M201 31v2M249 24v2M228 102v2M162 222v1M30 327v1M193 207v1M105 76v1M226 280v2M55 80v1M203 125v1M70 113v1M68 10v2M88 157v2M89 181v1M173 327v1M178 27v2M26 239v2M248 37v1M235 7v2M87 313v1M186 31v1M165 319v1M248 303v1M17 307v1M236 324v1M5 283v1M179 31v2M202 161v1M33 49v2M156 202v2M63 46v2M261 216v1M23 173v2M100 295v2M154 115v1M7 268v1M213 149v1M250 268v2M136 273v1M33 208v1M145 304v1M159 193v1M177 66v1M49 273v2M80 290v1M224 309v1M68 196v1M261 137v1M225 197v1M11 132v1M111 87v1M232 310v1M163 287v1M129 183v1M38 246v1M262 64v1M0 67v1M254 228v1M14 229v2M137 20v2M2 239v2M59 168v2M90 212v1M64 211v2M141 147v2M150 178v1M202 187v1M97 0v1M46 301v1M31 241v1M25 313v1M199 151v1M119 43v1M9 75v1M81 252v2M215 211v1M160 156v1M220 52v1M15 182v2M263 25v1M64 119v1M103 125v1M79 257v1M54 110v2M252 26v1M110 34v1M151 21v1M181 42v1M23 104v1M122 315v2M115 49v1M152 28v1M226 50v2M134 225v1M124 295v1M135 1v2M192 274v1M229 72v2M248 114v1M63 246v1M114 283v1M260 176v1M25 270v1M26 323v1M199 120v1M32 230v2M106 2v1M64 241v1M177 310v1M213 58v2M7 70v1M68 12v2M130 329v2M70 299v1M231 73v1M251 267v1M81 250v1M252 110v1M176 103v1M227 234v1M224 69v1M140 220v1M98 139v1M32 291v2M74 284v2M33 187v1M41 213v1M106 43v1M234 258v1M28 62v2M208 74v2M234 32v1M61 260v1M217 55v1M54 39v2M37 227v2M81 141v2M24 11v1M177 220v1M69 302v1M132 81v1M111 286v1M209 262v1M240 104v1M8 210v1M47 205v1M7 179v2M175 126v1M102 270v1M148 134v1M132 108v2M177 86v2M13 131v2M19 158v2M58 20v2M126 123v1M51 97v2M72 239v1M96 186v1M88 309v2M124 318v1M165 51v1M145 126v2M200 85v2M115 14v1M187 60v1M69 280v1M18 87v2M120 149v1M225 159v1M150 10v2M202 265v1M241 91v2M43 116v2M142 103v1M99 40v1M88 299v2M245 241v2M72 151v2M237 268v2M110 141v2M51 299v1M137 281v1M147 157v1M221 252v2M94 182v1M258 253v2M173 318v1M196 224v1M61 8v1M117 223v2M248 309v2M185 286v1M46 280v2M25 219v1M246 85v1M261 317v1M152 84v1M78 90v2M93 87v2M264 113v1M45 231v1M102 229v1M235 83v1M189 225v1M58 314v2M241 283v1M217 165v1M138 174v2M263 301v1M121 249v1M147 252v1M226 118v1M224 118v1M179 307v1M238 317v2M242 325v1M121 317v2M171 184v1M222 223v1M131 311v2M135 195v1M201 205v1M73 267v2M222 287v1M77 99v1M182 63v1M27 141v1M90 253v1M236 10v1M167 6v2M27 200v1M242 251v2M122 302v1M17 306v1M243 190v1M245 56v1M218 247v1M102 81v1M248 139v1M29 46v2M123 28v1M169 258v1M52 116v1M134 16v1M123 246v1M100 260v2M90 128v1M52 17v1M43 22v2M15 100v1M228 167v1M236 283v2M118 227v2M101 220v2M127 9v1M65 42v2M114 94v2M129 145v1M189 221v2M231 132v1M252 204v1M63 207v2M166 208v1M35 268v1M200 112v1M3 246v1M262 75v1M129 206v1M126 163v2M220 277v1M188 282v2M53 251v1M129 152v1M245 40v2M181 79v2M60 202v1M65 12v1M154 188v2M6 253v2M87 23v2M239 34v1M119 10v2M119 238v2M8 291v2M94 268v2M94 114v1M96 147v2M253 235v1M245 210v1M187 102v1M126 299v1M35 147v1M77 281v1M180 219v1M88 155v2M3 70v1M239 160v2M229 34v1M10 283v2M208 229v2M228 264v2M145 160v1M137 213v1M219 186v1M5 142v2M243 275v1M38 39v2M143 9v2M79 35v1M177 328v2M91 258v1M193 115v1M170 148v2M72 231v1M30 297v2M214 245v1M35 291v2M92 267v1M32 306v1M253 23v1M239 117v1M69 306v2M136 130v2M240 123v1M22 180v2M214 76v2M129 97v1M199 13v2M232 206v1M191 167v1M178 124v1M221 205v1M45 56v1M154 197v1M193 125v1M155 185v1M82 80v1M47 148v1M135 90v1M105 53v2M253 138v1M231 211v1M234 35v1M186 290v1M204 318v1M3 250v1M216 5v1M26 323v1M75 163v1M79 211v2M229 124v1M158 170v1M165 124v1M40 168v2M253 47v2M25 321v1M192 155v1M93 214v1M58 190v1M81 48v2M248 40v2M71 251v1M152 223v2M259 267v1M191 144v1M17 199v1M54 221v2M79 38v1M134 223v2M69 136v2M75 244v1M87 328v1M226 272v1M3 150v2M57 199v1M165 146v1M161 266v1M173 200v1M0 187v1M18 197v1M25 276v2M53 295v1M209 49v2M175 230v2M106 250v1M219 119v2M28 124v2M85 243v2M169 263v2M198 194v1M230 13v2M239 86v1M76 42v2M233 40v2M23 315v1M147 261v1M210 91v1M101 255v2M19 314v2M199 92v1M55 93v2M88 235v1M84 234v1M252 95v1M162 21v2M30 108v1M216 233v1M61 277v1M157 35v1M43 307v1M59 93v2M152 89v1M92 325v1M186 289v1M19 195v1M62 322v2M117 132v1M197 105v1M246 5v1M163 18v2M82 192v2M114 224v1M81 39v1M40 131v1M43 294v2M228 257v1M3 236v1M228 91v2M171 300v1M71 139v1M253 177v1M152 307v1M112 86v2M224 110v1M185 147v2M42 164v1M71 32v2M143 236v1M152 244v1M7 183v1M223 25v1M14 310v2M36 250v2M224 267v1M155 65v1M79 292v1M134 187v1M141 98v2M222 132v1M104 304v2M192 322v2M153 163v1M2 136v1M70 65v1M48 198v2M251 174v1M164 26v1M56 194v1M152 295v1M220 157v1M108 231v1M152 242v1M145 12v1M48 316v1M40 44v1M86 322v2M182 46v1M62 259v1M110 324v1M87 305v1M41 200v1M204 147v2M24 204v1M61 36v1M242 215v1M121 304v2M110 204v1M179 71v2M190 6v2M245 38v1M216 320v1M29 301v2M225 100v1M234 73v1M263 182v1M161 70v1M260 275v2M108 253v2M159 201v2M26 246v2M229 73v1M204 148v2M18 48v2M220 113v2M210 37v2M233 93v2M95 247v1M130 327v2M73 293v1M0 309v1M122 306v1M67 154v2M108 158v2M259 320v1M119 204v1M248 43v1M29 145v2M239 44v2M74 142v1M231 257v2M2 216v1M218 184v1M158 34v1M245 8v1M229 312v1M163 118v2M239 102v1M232 180v1M58 180v1M65 179v1M214 218v1M149 15v1M244 254v1M61 190v2M241 5v2M243 304v2M233 273v1M153 121v1M31 256v2M159 113v2M187 325v1M1 163v1M90 317v1M254 240v1M57 199v1M47 277v2M226 314v2M82 258v2M259 134v2M222 133v2M241 36v1M19 118v1M115 304v1M83 113v2M46 34v1M149 66v2M13 249v1M257 156v1M78 89v2M48 320v1M140 265v2M143 153v1M88 146v1M165 189v1M30 44v1M236 108v1M262 17v1M184 42v2M44 12v2M175 75v1M259 31v2M42 327v1M96 235v1M122 288v1M26 306v1M40 299v1M46 46v1M160 93v1M170 294v1M37 4v2M34 324v2M64 263v2M186 96v2M79 70v1M224 108v1M114 7v2M182 3v1M64 58v1M116 266v1M29 56v2M60 317v1M65 39v2M47 28v1M230 268v2M228 204v1M179 257v1M122 188v1M108 14v1M178 215v1M224 315v1M241 110v2M130 209v1M129 43v2M232 107v1M55 148v1M173 14v1M176 295v1M20 111v1M134 92v1M5 68v1M96 3v1M260 194v1M39 8v1M13 172v1M219 167v1M164 179v2M65 7v2M107 210v1M30 89v2M171 57v1M225 161v1M126 49v1M162 181v1M116 270v1M206 278v1M249 142v1M123 20v1M46 19v1M153 11v2M152 161v2M255 249v1M1 201v2M127 89v1M164 24v1M1 219v1M67 31v1M150 48v1M218 296v2M64 257v1M172 208v1M130 271v1M134 278v1M182 300v1M66 247v2M182 254v1M198 160v1M187 115v1M70 159v1M79 10v1M152 134v2M170 293v1M47 61v2M223 194v1M162 323v1M254 99v1M208 26v1M255 299v2M109 165v2M204 46v2M208 31v1M53 73v1M48 124v1M23 274v1M172 182v1M65 220v1M226 25v1M171 313v1M91 259v1M210 134v2M28 118v1M161 169v1M221 151v2M49 142v2M27 175v2M125 181v2M52 118v1M84 287v1M237 19v1M139 106v2M118 52v1M38 319v2M239 150v2M137 315v1M43 200v2M177 322v1M46 168v1M118 307v2M184 322v1M0 40v1M51 84v1M80 239v2M93 181v1M150 121v2M187 306v2M9 14v2M184 17v2M192 142v2M63 247v2M191 199v1M140 149v1M168 44v1M59 259v1M100 207v1M261 20v1M16 59v1M61 21v1M243 39v1M39 15v1M3 115v2M69 282v1M1 125v1M76 231v2M201 266v1M41 286v1M17 305v2M17 216v2M225 292v1M13 114v1M150 247v1M214 114v2M3 226v1M221 47v1M6 57v1M155 105v1M64 21v2M58 146v1M215 39v2M243 266v2M34 174v1M15 125v1M95 180v1M79 191v2M81 244v1M253 10v1M218 273v2M219 46v1M210 119v1M163 316v2M17 29v1M148 31v1M204 302v2M211 33v2M244 252v1M18 236v1M34 117v1M82 11v1M11 241v1M58 197v2M60 113v1M182 208v1M35 48v1M216 235v1M237 162v1M242 30v2M199 98v1M70 7v1M102 198v2M244 232v2M188 81v2M199 256v2M256 325v2M91 290v1M219 277v2M105 189v1M131 288v1M133 230v1M120 84v2M148 64v1M190 233v1M250 204v1M230 245v1M172 272v1M84 173v1M264 209v1M209 258v2M128 303v1M24 104v1M128 298v1M237 274v2M179 259v1M57 303v2M234 100v2M194 211v2M2 135v1M258 294v1M144 237v1M165 281v2M67 302v1M225 9v1M137 115v1M38 215v2M13 313v1M261 148v1M38 226v1M160 283v1M160 302v2M213 177v1M254 184v2M129 215v1M258 273v2M205 156v1M245 226v1M35 49v1M260 143v1M51 85v2M152 129v1M143 232v2M190 328v1M89 200v1M219 44v1M4 315v1M33 267v1M66 315v1M177 149v1M40 311v2M135 274v2M90 315v1M193 294v2M240 154v2M139 57v1M41 37v1M26 42v1M148 280v1M239 257v1M78 179v1M185 81v1M239 67v2M226 138v2M23 125v2M154 54v2M33 28v2M125 166v1M224 325v1M120 249v1M189 112v1M180 132v1M185 270v1M104 156v1M242 240v1M93 179v2M60 295v2M73 63v1M54 109v2M60 195v1M213 211v1M107 299v1M30 311v1M34 220v1M67 277v2M247 58v1M14 137v1M231 253v1M194 34v2M199 102v1M253 141v1M211 65v2M264 57v1M228 6v1M123 277v1M137 255v1M258 196v1M52 222v2M106 142v1M101 236v1M167 217v1M258 60v2M133 165v1M199 265v1M19 243v2M233 300v1M196 240v1M159 180v1M54 29v1M189 35v1M179 83v1M117 292v2M152 158v2M251 294v2M108 242v2M143 7v2M169 140v1M130 94v1M5 33v1M9 308v1M145 259v2M208 129v2M251 305v2M238 173v2M262 154v1M153 327v2M36 80v2M218 2v2M222 145v1M175 247v1M132 220v2M172 222v2M25 288v2M186 249v1M8 138v1M134 39v1M186 13v2M196 48v2M152 162v1M149 147v2M16 155v1M21 119v1M94 120v1M184 262v2M61 140v2M167 112v1M131 281v2M43 290v1M36 245v2M209 50v1M217 265v2M36 134v1M193 4v2M92 54v1M76 55v1M75 288v1M220 15v2M109 96v1M248 6v1M5 291v1M49 1v2M135 101v2M60 67v2M59 125v2M63 192v1M209 78v2M178 258v1M186 162v1M91 228v2M19 228v2M62 85v1M175 285v2M30 129v1M66 160v2M85 240v2M242 236v1M103 77v1M195 295v2M205 283v2M155 264v1M149 216v1M136 42v1M109 210v1M217 194v1M21 231v1M29 183v1M125 78v2M187 182v2M8 66v2M261 51v1M234 195v1M264 142v1M128 103v1M134 231v1M257 179v1M115 194v1M253 46v2M157 242v1M22 66v1M208 259v2M107 256v1M165 247v1M61 5v2M209 300v1M236 52v2M6 165v2M179 185v2M147 79v1M14 59v2M77 227v1M90 74v1M10 267v1M115 256v1M61 241v2M239 125v2M136 31v1M184 229v1M192 96v1M91 186v1M116 207v1M188 9v2M121 59v1M85 182v2M18 130v1M133 92v1M223 27v1M144 158v1M141 31v1M124 108v1M164 105v2M2 109v2M68 160v2M149 236v1M83 219v2M129 185v1M81 325v2M145 260v2M170 268v2M59 240v2M199 227v2M162 264v2M260 281v1M93 97v2M207 59v2M41 42v1M164 152v1M202 44v1M192 137v1M211 171v1M76 67v1M191 119v1M230 323v1M173 248v1M90 116v1M84 275v1M3 188v2M39 231v1M83 20v1M24 216v2M196 90v1M153 66v1M188 109v1M258 112v1M19 34v1M72 65v1M90 155v1M76 96v1M184 130v1M36 79v1M256 301v1M248 290v1M154 261v2M131 257v1M100 317v1M101 99v1M101 177v1M223 276v1M159 68v1M139 323v2M97 37v1M170 195v1M182 246v2M106 103v2M186 85v1M125 243v1M211 58v1M89 184v1M228 248v2M16 310v1M217 54v1M78 12v1M19 73v1M149 303v1M141 197v2M67 78v2M204 143v1M89 50v1M35 207v1M101 9v1M182 53v2M111 15v1M2 269v2M20 96v2M66 54v1M14 221v2M11 30v1M196 269v1M138 102v1M43 7v2M166 151v1M107 255v1M23 207v1M107 163v2M263 180v2M49 286v1M254 44v2M230 88v1M237 67v2M237 315v2M83 184v2M132 239v2M3 138v1M235 289v1M204 127v1M23 157v1M1 326v2M137 85v1M214 195v1M132 250v1M68 54v1M88 15v1M108 266v1M39 268v2M8 321v1M138 142v1M105 90v1M118 29v2M125 137v1M27 260v1M57 192v1M221 12v2M107 104v1M138 105v1M174 281v1M213 127v2M23 259v2M35 219v1M118 165v2M48 224v1M133 168v1M153 214v1M224 161v1M242 180v1M117 19v1M152 269v1M136 38v2M126 35v2M2 8v1M147 269v1M243 90v1M108 92v1M137 230v2M10 149v1M223 109v2M8 59v2M147 15v2M160 311v1M29 318v2M76 165v1M66 4v1M184 6v1M56 32v2M22 304v1M109 227v1M107 9v1M33 185v1M178 40v1M100 74v1M56 236v1M256 44v1M22 164v1M238 322v1M38 62v1M263 122v1M77 174v1M69 257v1M236 32v2M183 176v2M104 84v1M216 139v1M92 98v1M25 90v2M116 42v1M137 112v2M253 188v1M136 20v1M185 164v1M119 94v2M171 3v1M129 285v1M230 199v2M194 329v1M39 320v1M169 238v1M22 10v1M187 182v1M50 92v1M106 200v1M252 12v1M232 250v2M81 69v1M67 235v1M77 122v2M95 245v1M21 278v2M132 137v2M56 82v1M45 224v1M231 58v1M221 6v1M158 22v1M147 204v1M174 233v1M153 34v1M89 140v1M101 214v1M253 65v1M28 328v2M219 303v1M101 312v1M253 148v1M251 219v1M156 230v1M123 288v1M71 35v1M125 135v1M181 5v2M157 269v2M12 198v1M59 56v1M189 271v1M227 153v1M261 60v1M194 95v1M54 46v1M177 88v2M43 227v1M242 64v2M188 81v2M219 87v2M205 41v1M241 162v1M58 317v2M243 3v1M244 197v2M175 115v2M256 317v1M100 123v1M161 111v1M139 179v1M158 288v1M191 15v1M255 147v1M155 280v1M204 28v2M32 5v2M40 39v2M184 36v1M211 263v1M64 276v1M112 265v1M179 121v1M155 308v1M210 139v2M116 68v2M152 284v1M163 152v1M212 31v1M67 282v1M125 1v1M109 246v1M65 142v2M57 83v2M12 61v1M66 167v1M0 119v1M168 38v2M86 281v1M50 302v2M39 235v1M103 179v1M209 100v1M165 297v2M225 156v1M202 255v1M25 285v1M199 156v2M11 11v1M113 97v2M179 168v1M198 199v2M32 162v2M129 111v1M198 12v1M217 212v1M105 219v1M37 44v1M146 285v2M21 302v1M220 233v1M231 304v1M22 138v1M103 0v2M212 172v2M207 277v2M125 279v1M17 240v2M134 35v1M44 223v2M171 242v2M225 76v2M9 172v1M234 279v1M222 159v2M176 8v2M125 0v1M61 43v1M259 136v1M242 217v1M225 65v1M184 248v1M135 214v1M63 75v1M148 58v1M111 128v1M249 297v1M204 183v1M85 1v1M206 118v1M242 194v1M204 177v1M204 329v1M246 89v1M66 309v2M227 27v1M263 79v2M28 121v2M107 87v1M160 26v1M206 293v1M262 250v2M125 225v1M143 266v1M63 97v1M13 20v1M121 196v1M139 38v1M148 111v1M6 111v2M17 129v2M232 175v1M111 99v2M151 34v1M31 36v1M144 248v2M148 76v1M113 255v1M15 4v1M146 296v1M132 285v1M138 287v1M101 285v1M20 29v2M19 256v2M241 213v2M241 305v1M220 70v2M234 120v2M16 287v2M61 109v1M144 227v1M10 13v2M112 104v1M187 157v1M54 273v2M15 152v2M179 85v2M196 286v1M34 80v1M14 24v1M82 34v1M86 88v2M178 245v1M204 188v1M36 177v1M122 218v1M121 313v1M113 288v2M156 210v1M7 312v2M242 272v1M139 318v1M46 37v1M25 259v2M251 319v1M142 303v1M48 105v2M117 320v1M198 153v1M95 4v1M79 86v2M68 272v2M15 320v1M217 45v1M249 114v1M152 327v2M253 304v1M193 55v2M24 101v1M56 257v2M254 71v1M248 5v1M238 173v2M142 197v1M196 326v1M262 186v2M253 230v2M216 264v1M56 179v1M57 197v1M137 40v1M178 90v2M239 202v1M78 130v2M241 277v2M205 285v2M165 122v1M41 317v1M247 158v2M10 146v1M229 31v2M236 245v2M94 217v2M23 96v1M178 277v1M20 104v2M237 176v1M16 193v2M73 104v1M142 75v1M126 180v1M2 164v1M232 58v1M49 208v1M41 124v1M96 188v2M32 205v1M61 39v1M158 61v1M207 37v1M45 126v2M35 81v1M146 290v1M68 278v2M130 244v1M114 58v1M213 229v1M262 112v2M130 251v1M114 208v1M138 235v1M130 166v2M97 27v1M149 139v2M162 263v1M73 218v1M98 15v1M96 277v1M159 291v2M78 314v2M28 143v1M259 103v1M116 27v2M19 87v2M152 148v2M100 134v2M239 271v1M121 65v2M173 219v1M173 159v2M116 28v1M145 53v1M95 7v2M31 13v1M226 252v1M30 313v1M139 8v1M42 193v1M98 215v1M42 276v2M167 67v2M1 174v1M236 253v2M41 324v1M31 71v1M239 304v2M143 113v2M108 75v2M46 237v1M264 324v1M148 183v2M144 199v1M237 44v2M237 43v1M242 122v1M120 21v1M170 131v1M169 117v1M161 20v1M210 296v2M54 323v2M174 297v1M241 180v1M98 192v2M74 58v1M134 123v1M210 268v1M235 40v1M187 84v1M192 246v1M250 263v2M6 59v1M158 140v1M171 77v2M61 305v2M264 68v2M82 228v1M171 274v1M204 253v1M45 9v2M22 270v1M127 108v1M200 113v2M114 277v1M61 148v1M139 52v1M210 318v1M191 192v1M0 155v1M203 253v1M222 5v2M155 45v1M77 318v2M163 149v1M228 92v1M143 107v1M103 263v1M39 276v1M239 283v2M128 81v1M140 66v1M181 188v1M79 137v2M119 139v1M250 169v1M60 212v2M149 16v1M130 1v2M80 183v2M183 261v1M10 172v2M207 102v1M63 5v1M61 325v1M225 274v1M37 68v1M165 174v1M247 4v1M178 81v2M64 111v1M229 216v1M85 30v1M229 307v1M134 121v1M131 283v1M84 65v1M196 40v1M104 227v2M167 212v1M110 99v1M242 327v1M148 302v1M76 136v2M230 210v1M137 34v1M80 311v2M61 108v2M154 171v2M154 187v2M75 181v1M30 256v1M124 294v1M1 141v1M73 198v2M8 282v1M165 65v1M139 90v2M102 86v1M73 22v2M45 257v1M211 297v1M30 149v1M19 144v2M100 174v1M8 67v2M110 99v1M67 5v1M168 257v2M156 92v1M96 280v2M80 29v1M97 136v1M67 19v1M180 241v1M219 210v1M141 319v2M155 256v2M226 48v2M202 128v2M104 99v1M96 160v1M165 81v1M107 173v2M108 228v1M185 177v1M204 108v1M103 265v1M105 123v1M229 98v2M144 296v1M118 23v1M156 79v1M155 80v1M171 230v1M84 52v1M258 191v2M75 189v2M4 318v1M185 187v2M142 184v1M241 199v2M177 40v1M153 184v2M259 143v1M154 257v1M59 298v1M225 240v1M76 98v1M159 328v1M74 173v1M176 49v1M34 8v1M185 280v2M170 219v2M76 242v1M26 36v1M74 209v1M177 232v1M184 76v2M163 205v2M241 248v2M93 171v2M109 62v2M67 105v1M258 281v1M7 197v2M157 125v2M160 290v2M71 71v2M252 275v1M264 77v1M17 258v2M248 96v2M100 165v2M14 6v2M228 154v1M179 171v1M87 245v1M134 89v1M105 108v1M211 88v1M177 71v1M91 28v1M104 36v1M22 216v2M62 254v1M67 69v2M221 267v2M234 43v1M84 9v2M42 276v2M105 217v1M180 247v2M224 306v1M215 118v2M222 24v1M205 219v2M52 44v2M68 142v2M160 37v1M31 197v2M131 228v1M117 169v1M90 233v2M92 19v2M82 104v2M83 279v1M192 184v1M56 223v1M39 26v2M215 251v1M191 107v2M97 142v2M127 242v1M230 287v2M47 221v2M69 290v1M27 264v2M145 322v2M231 106v1M123 272v2M96 45v1M53 71v1M4 316v2M114 271v1M158 61v1M241 78v1M241 210v2M0 317v2M247 316v2M140 107v1M31 80v1M260 73v1M149 6v1M194 320v1M260 187v1M241 220v1M105 35v2M26 198v1M235 187v1M90 301v1M178 309v1M4 314v2M64 19v2M44 288v2M167 105v2M164 208v1M136 303v1M93 53v2M174 223v2M134 301v1M56 292v1M186 70v1M82 91v1M154 72v1M253 2v1M54 48v1M72 291v1M184 294v1M95 33v1M215 317v2M216 321v2M143 112v1M153 117v2M210 301v2M196 315v2"/><path stroke="#cdd7ff" d="M242 13v2M259 271v1M30 38v1M215 174v2M199 106v1M190 54v2M150 317v1M156 188v1M145 318v1M18 11v1M125 108v2M251 106v1M190 291v1M82 313v2M42 232v2M92 253v2M179 105v1M119 313v1M17 195v1M134 322v1M105 221v2M145 125v2M126 145v1M207 153v2M138 59v1M71 299v1M185 151v2M85 210v1M25 265v1M68 246v2M232 318v2M46 244v1M63 3v1M15 216v2M248 138v1M102 178v2M172 98v1M228 65v1M247 88v1M178 140v1M54 247v2M115 47v2M52 239v2M161 183v1M50 310v2M36 28v2M199 140v1M185 252v1M73 125v1M175 255v1M220 133v1M135 55v2M225 235v1M184 216v1M230 291v2M29 104v1M201 96v1M227 177v1M152 0v1M226 293v1M209 110v1M215 307v2M13 87v1M61 186v1M254 66v1M32 323v1M245 308v1M98 254v1M192 227v1M236 254v2M40 218v1M122 205v1M69 315v1M230 36v2M250 60v1M111 173v1M1 32v1M155 116v1M26 231v1M247 186v1M9 216v2M196 176v2M105 287v2M215 137v2M52 75v2M121 74v2M55 324v1M185 257v1M62 209v2M263 47v1M38 244v2M18 309v1M1 164v2M61 233v1M211 39v1M181 246v1M88 41v1M132 179v2M71 301v1M223 159v1M136 115v1M46 163v2M84 1v1M199 172v2M60 183v1M112 218v1M124 44v2M150 134v2M75 145v1M182 7v2M151 221v1M215 197v2M129 81v1M220 308v1M56 160v1M125 215v1M120 254v2M170 165v2M143 318v2M66 143v1M113 59v2M42 293v1M134 100v1M252 141v2M127 61v2M195 59v2M87 325v1M27 207v1M156 79v2M102 178v2M225 25v1M74 158v1M110 297v2M233 322v1M205 116v1M256 174v2M115 245v1M132 125v1M256 142v1M186 34v1M113 100v1M127 288v2M214 276v1M22 321v1M261 196v2M26 184v2M98 204v1M58 280v1M148 32v2M201 269v1M96 69v1M108 283v1M162 284v1M37 242v1M248 161v1M28 250v1M90 64v2M262 18v1M224 119v1M229 208v1M232 281v1M51 76v1M135 302v1M104 44v1M53 193v1M36 188v2M100 108v2M195 97v1M11 34v1M153 227v2M256 322v1M107 163v2M73 167v2M262 60v2M153 108v1M166 262v1M133 271v1M107 111v1M207 129v1M252 119v1M201 206v2M29 302v1M89 282v1M87 117v1M155 297v1M194 6v2M151 110v1M214 260v2M237 115v2M74 20v1M142 15v1M225 153v1M217 154v2M194 83v1M126 245v2M78 94v1M206 182v1M43 16v1M185 135v1M162 144v2M62 321v2M58 11v1M147 125v1M29 37v2M225 21v2M75 299v1M229 83v1M237 51v1M137 213v1M35 212v2M154 201v1M109 177v1M44 14v1M175 147v1M217 121v2M67 260v1M75 249v1M128 166v1M176 229v2M254 87v1M115 133v1M231 73v1M97 150v2M52 103v2M6 86v1M108 57v1M250 267v1M97 119v2M82 218v1M254 246v2M47 10v2M16 183v1M123 132v2M103 69v1M238 262v1M221 265v1M47 111v2M3 148v2M44 308v1M142 6v1M202 137v1M262 181v2M105 67v1M197 219v2M5 41v1M100 316v2M226 293v1M104 197v1M26 290v1M16 238v1M182 97v2M134 138v2M58 151v1M200 228v1M138 110v1M207 217v2M209 329v1M14 207v1M61 322v1M128 272v2M31 114v1M191 80v2M96 256v2M56 314v1M217 13v1M193 78v1M15 114v1M76 254v2M173 24v1M252 186v1M30 223v1M126 165v1M207 275v2M64 268v2M109 110v1M231 275v1M153 25v1M84 88v1M148 104v1M7 138v1M203 52v1M115 61v1M238 196v1M115 262v1M191 120v1M190 5v2M106 303v2M66 301v2M185 276v2M180 151v1M75 227v2M25 326v1M261 296v2M202 196v1M168 296v1M137 265v2M208 13v2M0 38v1M119 218v1M221 56v1M99 27v2M249 122v1M194 105v1M232 83v1M85 226v1M1 4v2M93 135v1M200 8v1M248 295v1M64 236v2M204 234v2M187 170v2M191 279v1M120 123v1M174 94v1M1 238v1M209 251v1M264 52v1M6 274v2M157 70v2M0 160v1M77 221v1M3 90v1M173 288v1M32 124v2M173 206v1M187 262v1M113 322v1M167 231v2M249 171v1M34 32v2M24 153v1M158 86v1M60 50v2M110 19v1M90 43v1M126 17v1M111 197v2M107 85v2M95 62v2M180 72v1M217 157v1M155 315v1M173 182v1M91 251v1M21 211v1M21 238v2M183 104v1M25 177v2M111 19v1M55 75v1M218 100v1M25 290v1M253 178v1M205 184v1M252 233v1M250 119v1M243 153v1M255 37v2M153 41v2M215 200v1M186 145v1M170 301v2M43 111v2M256 130v1M24 53v2M35 100v2M125 313v2M230 191v1M163 292v1M123 26v1M157 156v2M130 73v1M47 226v1M34 229v1M144 82v2M261 197v2M28 248v1M237 242v2M3 209v1M169 16v1M120 273v1M17 239v2M264 15v1M137 122v2M191 83v2M152 306v2M233 235v2M19 130v1M234 79v1M166 209v1M144 19v1M159 27v2M8 52v2M200 0v1M128 6v1M210 168v2M39 141v1M110 20v2M190 145v1M227 209v1M174 45v2M247 291v2M55 217v1M107 13v1M23 196v1M216 233v2M27 45v1M213 173v1M220 40v1M236 197v2M98 36v1M162 60v1M150 159v1M124 250v1M96 76v2M204 15v2M264 193v2M137 182v1M189 57v1M217 246v2M52 138v2M145 100v1M181 213v1M81 103v2M34 3v2M174 95v2M172 83v2M91 284v2M233 259v1M25 305v2M94 261v2M246 170v2M125 205v1M231 133v2M209 253v1M39 11v1M83 264v1M55 173v2M125 277v2M141 41v2M155 71v1M71 278v1M227 282v1M46 235v1M120 39v1M226 216v1M62 108v1M23 28v1M132 268v2"/><path stroke="#ffff5c" d="M215 64v1M108 13v1M251 106v2M132 77v1M32 105v1M63 308v1M149 171v2M128 295v1M71 188v1M41 19v2M195 96v2M118 25v2M256 108v2M239 15v1M109 316v1M244 228v1M248 109v1M151 63v1M247 254v1M251 53v1M234 109v1M221 111v2M66 54v1M125 251v1M222 117v1M150 256v2M3 84v2M180 257v1M185 28v1M62 328v1M119 40v2M5 292v2M173 157v1M35 254v1M219 17v1M35 233v1M2 145v2M168 50v1M40 12v2M100 120v1M193 193v2M242 66v1M254 75v2M250 272v2M176 164v2M203 60v1M252 262v1M117 45v2M181 71v2M100 171v1M107 263v1M174 273v1M49 269v1M5 222v1M200 323v1M116 233v1M5 216v1M104 91v2M157 241v1M17 38v2M175 290v1M190 235v2M240 69v2M182 246v2M80 55v2M162 312v1M12 305v1M66 37v1M164 84v1M262 56v2M65 148v1M242 201v2M84 102v1M227 99v1M260 114v1M259 210v1M260 37v2M225 327v1M38 55v1M22 313v1M109 163v2M140 255v1M127 252v1M248 112v1M42 323v1M68 115v2M129 127v1M35 123v1M234 153v1M216 279v1M145 165v2M175 50v1M210 147v1M90 258v1M12 126v2M108 305v1M226 175v1M218 145v2M161 130v1M262 128v1M120 227v1M147 257v1M44 68v1M186 112v2M211 9v1M176 160v1M26 22v2M108 7v1M5 45v1M233 43v1M247 313v1M92 212v1M176 175v1M35 104v1M94 99v1M122 69v1M222 217v1M120 116v1M132 114v1M73 226v2M195 297v1M28 272v1M110 264v1M5 169v2M149 61v1M219 53v1M170 133v1M165 250v1M125 60v1M71 207v1M77 158v1M249 128v1M240 284v1M159 95v1M99 273v1M10 238v1M104 24v1M109 188v2M11 294v1M154 234v2M94 259v1M264 173v1M101 189v1M115 145v2M164 251v2M40 158v1M121 20v1M24 132v1M230 182v1M0 219v1M34 266v1M191 69v1M235 256v1M146 190v1M174 158v1M243 37v1M10 301v1M52 153v1M206 127v1M174 65v1M230 248v1M154 79v1M114 176v1M53 88v1M156 232v1M48 215v1M195 36v2M154 53v1M23 190v1M166 297v2M201 160v2M225 109v1M14 229v2M38 124v2M182 93v1M194 105v1M17 189v1M226 70v1M15 248v1M52 100v1M141 48v2M157 58v1M103 80v1M192 327v1M118 262v1M144 154v2M129 46v1M132 210v1M110 28v1M116 192v1M227 191v1M85 158v2M226 263v1M221 172v2M254 40v1M51 282v1M86 19v1M183 17v2M60 60v1M44 158v1M11 191v2M261 310v1M105 292v1M138 239v1M156 169v1M159 233v1M22 191v1M51 165v2M157 299v1M117 179v1M125 234v1M100 73v1M45 195v1M100 267v1M232 136v1M68 154v1M264 137v1M110 136v1M207 252v1M215 66v1M181 294v1M125 16v1M44 62v1M197 90v1M67 170v1M258 4v2M198 280v1M73 305v2M93 256v1M170 118v1M170 121v1M36 276v2M18 171v1M11 266v1M27 161v1M55 20v1M136 300v1M5 103v1M183 290v1M43 181v1M160 75v2M6 171v1M138 177v1M161 101v1M26 233v1M24 266v1M261 201v1M1 73v1M88 114v2M85 225v1M24 314v1M154 212v2M65 65v2M148 86v2M88 17v2M18 155v2M222 101v1M161 22v1M189 2v2M83 318v2M87 28v1M169 47v2M196 93v1M230 91v1M256 126v1M88 292v2M103 177v1M77 207v1M90 257v1M211 114v1M142 287v1M133 321v1M156 66v2M66 149v1M50 124v2M169 124v1M232 57v2M194 82v2M213 237v2M93 67v1M134 140v1M147 92v1M83 64v1M89 62v1M157 201v2M43 277v1M96 231v1M140 121v1M253 56v1M98 25v1M228 200v2M242 90v2M141 321v1M109 173v1M168 324v1M216 186v2M10 43v1M141 38v1M261 219v1M232 296v1M79 156v1M214 131v2M168 306v1M120 305v1M53 61v1M218 297v1M141 279v1M128 92v1M3 211v1M15 164v2M60 25v1M159 254v1M237 323v1M222 181v2M122 320v1M100 247v2M38 158v2M147 26v2M214 65v1M153 56v1M88 228v1M239 182v1M154 95v2M42 16v1M245 14v2M261 99v1M78 222v1M144 7v1M154 173v1M191 275v1M238 193v1M49 239v1M53 136v1M229 180v2M82 241v1M217 294v2M14 24v1M138 213v1M156 277v1M43 44v1M22 57v2M53 105v2M30 320v1M72 42v1M229 64v1M24 83v2M137 154v1M204 287v1M132 60v1M190 159v1M114 98v1M2 84v2M51 193v1M177 322v1M223 73v1M39 258v1M100 167v2M74 74v1M142 223v1M106 291v1M24 255v1M207 157v1M186 200v2M8 16v1M225 36v1M235 56v1M57 157v1M222 309v1M244 113v1M100 213v1M210 116v2M224 174v1M111 112v1M80 56v1M55 182v1M186 69v1M231 73v1M11 249v1M159 275v1M102 36v1M246 2v1M105 198v2M214 13v1M93 247v2M124 21v1M242 232v2M13 216v1M22 46v1M13 57v1M91 123v2M91 16v1M253 234v1M149 286v2M217 122v1M156 101v2M149 1v1M251 214v2M169 51v2M207 189v1M185 0v1M58 220v1M103 46v1M44 254v1M224 52v1M76 30v1M35 58v2M9 125v1M177 40v1M69 209v1M211 121v2M78 116v2M251 305v1M207 108v1M147 325v1M44 221v1M78 34v1M162 87v1M120 147v2M74 108v2M211 139v1M27 125v1M81 101v1M166 242v1M115 23v1M21 89v1M169 82v1M137 204v1M172 85v2M34 302v1M248 117v1M261 8v1M253 213v1M195 318v2M55 150v1M77 5v2M55 301v1M249 12v1M103 291v1M48 152v2M45 237v2M144 268v1M58 137v1M59 113v1M112 68v1M109 183v2M129 134v2M118 20v1M20 30v1M124 175v1M123 187v1M254 306v1M213 22v1M262 310v2M120 185v1M237 38v1M58 329v1M73 63v1M65 196v1M101 208v2M64 149v1M145 116v1M72 224v1M60 24v2M59 249v1M224 308v1M231 167v1M237 278v1M92 6v2M31 170v1M213 186v1M25 44v1M100 16v1M55 280v2M70 307v2M31 64v1M54 313v2M146 125v2M174 309v2M45 113v2M249 215v1M97 37v1M156 178v1M150 21v1M185 101v1M99 236v1M111 302v2M18 50v2M120 188v2M185 79v1M172 53v1M18 73v1M8 286v1M250 148v1M35 309v1M71 57v2M212 189v2M70 168v1M261 28v1M18 118v1M184 159v1M133 149v1M243 240v2M256 14v1M21 47v1M206 275v1M82 54v2M158 324v1M213 240v1M16 144v1M255 184v2M101 152v1M147 222v1M262 202v1M88 209v2M216 265v1M29 32v2M235 84v1M84 247v2M194 244v1M75 71v1M111 57v2M35 306v2M186 217v1M97 300v1M63 90v1M92 66v1M14 318v1M57 257v1M7 110v2M18 54v1M30 291v1M0 284v1M60 241v2M104 155v1M217 3v1M198 72v1M118 189v2M82 219v1M203 304v1M74 137v2M194 59v1M7 48v1M264 298v2M160 61v1M244 135v1M197 98v1M237 168v1M59 16v2M172 102v1M248 127v2M173 221v1M36 71v1M181 319v1M114 306v1M125 184v1M140 174v1M139 290v1M137 64v1M139 43v2M7 307v1M55 236v1M97 130v1M228 10v2M157 209v1M79 329v1M215 314v1M255 19v2M8 148v1M211 216v1M227 195v1M252 13v1M192 304v2M167 149v1M94 206v1M252 245v1M58 246v1M51 68v1M71 134v1M67 206v2M0 223v2M141 98v1M264 164v1M176 217v2M2 15v1M61 9v2M5 41v1M261 136v1M180 268v1M175 3v2M187 294v1M21 112v1M139 56v1M74 122v1M28 253v1M187 268v2M31 318v1M89 293v2M57 249v1M263 118v2M192 45v2M162 77v2M43 327v1M73 131v1M235 185v1M162 141v1M202 177v1M84 278v1M263 254v2M179 305v2M150 151v1M175 92v1M161 321v1M149 322v1M192 102v1M52 93v2M124 120v1M247 72v1M64 30v1M264 315v1M4 46v1M181 282v2M204 43v2M13 215v1M114 88v1M42 198v1M38 118v1M230 27v1M89 171v2M215 224v2M177 146v1M199 134v1M1 308v2M264 105v1M3 107v1M232 160v1M247 51v1M13 8v1M257 52v1M78 191v1M61 123v1M201 297v1M245 130v2M73 110v1M184 82v1M199 181v2M17 215v1M259 254v2M232 32v1M212 168v1M121 173v1M34 22v1M88 161v1M182 196v2M212 123v1M88 287v1M24 322v1M89 196v1M53 13v1M227 288v1M25 105v1M29 231v1M4 81v2M252 170v1M138 149v2M214 299v1M108 283v1M149 222v1M207 154v1M227 98v1M123 38v1M247 260v1M118 299v1M259 133v1M101 214v2M180 253v1M63 161v1M149 255v1M130 194v1M228 300v2M131 180v1M34 71v1M126 83v1M198 112v1M183 267v1M119 70v2M254 195v2M141 22v1M125 326v1M65 47v1M83 278v2M113 273v2M163 136v2M136 35v1M253 171v1M111 5v1M18 210v2M235 288v1M221 10v1M178 102v2M77 230v1M150 196v1M109 163v1M58 325v1M127 259v1M18 299v1M60 223v1M5 121v1M85 218v1M69 25v1M44 29v1M81 61v1M36 120v1M91 181v2M105 85v2M64 27v1M122 301v1M23 113v1M244 50v1M256 187v1M223 5v1M151 158v2M111 267v2M202 10v1M167 142v2M206 162v1M262 19v1M251 152v1M81 56v1M250 3v1M220 143v1M255 1v1M55 164v1M144 22v2M162 172v1M140 70v1M19 263v1M99 149v2M248 61v1M218 205v1M84 233v1M159 69v2M198 148v2M129 196v2M12 108v2M172 324v1M191 308v1M26 71v1M218 318v1M177 299v1M207 241v2M263 67v2M9 280v1M100 258v1M100 7v2M73 155v2M203 16v1M154 9v1M206 256v1M200 232v1M189 260v1M200 101v1M134 19v2M12 309v1M213 140v2M134 328v2M31 161v1M43 0v1M37 47v2M121 74v1M126 272v2M83 262v2M222 129v1M60 322v1M192 301v1M174 77v1M127 246v1M156 61v1M199 204v1M49 221v1M222 72v1M40 132v1M10 235v1M179 186v1M58 13v2M233 172v1M126 224v1M156 165v1M40 316v1M40 299v1M187 64v1M184 315v1M213 326v1M156 279v1M249 141v2M102 55v2M222 89v1M7 234v1M50 252v1M132 164v1M242 36v1M114 314v1M152 232v1M98 27v1M44 280v2M18 236v2M256 280v1M26 137v1M175 116v1M101 321v1M113 121v1M235 66v1M110 289v2M159 149v1M220 287v2M227 70v1M99 74v1M29 94v1M236 111v1M19 323v1M74 208v2M28 328v1M57 92v2M152 214v1M104 195v1M109 127v1M194 125v2M200 187v1M217 99v1M159 311v1M126 151v1M257 16v1M186 33v1M24 277v1M141 241v1M225 323v1M57 96v1M34 191v1M93 117v2M10 151v1M9 256v2M32 59v1M155 60v1M55 132v1M33 112v1M186 207v2M264 275v1M40 232v1M129 81v1M142 269v1M163 96v1"/><path stroke="#fff200" d="M171 318v1M118 166v1M57 27v3M201 115v3M169 154v1M251 302v3M256 86v3M15 288v2M183 310v1M220 94v2M92 312v2M166 257v1M167 56v1M110 16v1M205 116v1M191 80v3M166 247v1M150 148v1M58 100v1M243 218v1M23 49v1M30 291v3M49 78v3M206 309v2M182 29v2M252 198v2M194 153v2M46 233v1M236 3v3M150 301v2M63 262v1M41 242v1M95 248v1M25 76v3M86 293v2M178 286v1M178 289v1M176 187v1M49 230v1M192 179v2M177 266v1M89 280v3M32 60v1M152 117v3M45 226v3M74 294v3M122 165v1M163 49v1M173 144v1M201 311v1M207 176v1M185 77v1M50 269v1M76 22v1M197 208v2M160 159v1M37 291v1M194 149v1M243 75v1M76 300v2M228 184v3M140 319v1M184 5v2M108 157v2M112 263v1M211 70v3M163 102v1M130 110v1M147 98v1M166 116v1M157 87v2M241 176v1M194 172v1M94 38v1M146 290v2M253 8v2M64 153v1M153 28v2M173 204v2M221 86v2M53 105v1M132 2v1M232 179v1M32 167v3M107 208v3M99 167v2M208 182v3M24 144v1M148 5v2M262 267v2M71 200v1M263 42v1M151 24v1M67 26v2M250 268v1M112 300v1M114 232v2M203 79v1M148 187v1M241 156v1M16 66v2M258 106v3M229 130v3M264 191v2M256 113v1M183 58v1M125 188v1M107 139v3M54 305v1M113 205v2M145 209v1M171 282v1M144 304v1M159 55v1M235 297v1M213 306v2M165 252v2M63 152v2M63 235v2M249 208v1M170 319v1M250 81v2M260 28v1M138 197v3M205 8v3M71 199v2M55 190v3M78 274v2M248 192v2M263 261v1M180 211v2M10 191v1M51 171v2M142 115v3M52 36v2M61 147v2M4 194v2M72 242v2M73 318v1M77 163v1M179 166v2M234 63v1M224 83v2M121 22v2M241 321v1M146 189v1M203 257v1M56 56v1M68 178v1M73 49v1M119 43v2M164 128v3M110 284v1M127 263v3M89 174v2M179 236v3M207 191v2M99 252v3M87 305v2M208 103v1M5 173v2M120 11v1M132 269v1M24 314v2M114 213v1M200 207v1M241 210v1M16 321v1M41 305v1M0 74v2M54 224v2M240 199v3M145 74v3M68 171v1M64 317v1M115 222v1M19 130v2M102 67v1M172 10v2M241 318v1M103 48v1M58 158v3M180 122v2M114 57v1M145 138v2M66 318v2M5 247v3M29 267v1M128 237v3M163 325v1M211 316v2M88 94v1M71 83v3M208 301v2M15 177v1M39 284v3M148 51v1M198 271v2M3 29v3M83 248v2M200 88v2M22 180v1M176 121v2M164 59v2M25 287v1M208 122v1M144 91v2M169 149v2M204 236v3M71 287v2M232 215v1M155 228v1M240 128v1M72 324v3M25 68v1M124 16v1M225 263v1M222 289v2M68 271v3M141 202v1M59 20v1M120 78v1M237 181v3M138 166v1M193 144v2M80 155v1M77 61v1M204 293v1M179 183v1M150 179v1M204 43v2M154 5v1M104 104v3M152 107v2M19 265v2M87 164v2M135 194v2M62 6v2M27 88v2M26 98v2M14 277v1M161 226v1M160 148v1M41 20v2M53 158v1M245 84v1M155 249v1M76 278v1M235 26v1M82 220v1M187 7v1M128 78v3M189 105v1M191 206v2M25 40v1M182 3v1M159 147v1M106 92v2M2 184v1M240 260v1M235 308v1M110 64v1M225 68v2M71 114v1M74 32v1M49 216v2M52 271v2M238 266v2M183 23v1M100 12v2M48 222v1M149 202v2M25 261v2M206 91v1M138 183v1M145 316v1M229 219v1M222 126v2M213 223v1M30 129v1M26 129v1M224 25v2M163 155v1M114 102v2M150 22v2M139 213v1M127 310v1M216 280v2M140 86v3M166 62v2M244 58v1M190 209v1M45 276v1M166 74v3M128 23v2M209 9v2M173 116v2M179 128v2M22 293v2M87 112v2M244 296v3M244 271v1M49 104v1M185 165v2M202 321v3M167 70v2M195 5v1M237 255v1M20 260v2M225 38v3M120 306v1M106 16v1M141 146v2M57 319v1M56 276v2M78 104v2M109 114v1M96 80v1M76 44v3M73 238v2M149 278v2M91 98v1M90 175v1M174 155v2M187 20v1M190 323v3M38 56v2M25 292v1M110 43v2M5 101v1M27 150v1M68 86v1M229 180v1M240 54v2M69 22v2M210 272v1M60 126v1M119 43v2M242 190v1M74 9v1M179 48v1M0 303v1M196 110v1M151 244v2M90 230v2M76 241v1M187 310v1M176 234v2M228 181v1M152 101v1M173 315v1M208 196v2M216 125v1M187 132v2M169 152v1M121 84v1M102 127v2M230 270v2M211 112v3M51 200v2M16 222v3M176 132v1M18 327v1M45 97v1M44 297v3M255 49v1M78 163v1M164 90v1M224 258v2M146 326v2M192 189v2M67 181v2M200 32v1M137 103v1M133 57v2M214 192v1M36 3v1M158 58v1M185 182v1M196 262v1M94 233v2M210 114v1M75 326v1M71 8v2M217 121v1M191 81v1M105 163v1M79 82v1M99 79v1M48 204v1M103 269v1M123 64v1M134 223v2M148 284v2M226 265v1M174 313v1M162 140v1M45 94v3M25 95v2M10 70v2M255 222v2M202 186v1M126 96v3M56 256v1M121 288v1M217 161v2M61 50v1M166 296v1M227 70v1M27 21v1M254 253v3M124 311v1M104 135v1M44 291v1M230 239v2M192 323v2M68 93v1M8 294v1M189 204v2M75 272v3M212 45v3M185 164v2M171 214v1M255 30v1M246 4v1M83 202v2M89 245v1M230 118v2M108 177v1M75 267v2M140 6v1M8 38v3M218 127v2M236 22v2M248 255v3M208 53v1M196 56v3M246 176v2M5 175v3M190 186v2M221 236v3M74 202v1M108 84v2M81 175v1M211 279v1M19 185v1M6 190v1M22 208v1M95 183v2M252 98v1M237 292v1M216 179v2M186 175v1M174 161v1M208 38v1M248 106v2M52 90v2M93 38v1M234 120v2M114 6v2M30 59v2M173 160v1M27 75v2M142 222v1M35 145v2M23 102v1M70 217v1M170 256v1M150 150v1M231 133v2M246 123v3M98 320v3M187 13v1M6 9v1M119 160v1M189 278v1M189 11v1M57 167v3M89 141v1M13 85v3M249 299v2M1 81v1M65 194v2M194 86v1M125 273v2M122 158v3M196 320v1M145 74v2M3 282v2M238 156v2M243 236v1M12 1v1M132 170v1M192 283v1M64 46v2M193 130v1M74 108v3M54 111v3M237 281v1M241 207v2M61 175v1M98 226v1M182 61v1M165 147v1M212 203v1M118 65v2M225 192v2M188 65v3M206 41v1M35 217v2M103 72v1M184 118v2M88 322v2M251 122v3M64 138v2M207 122v1M219 121v1M161 48v3M31 183v2M13 230v3M33 61v2M107 186v1M107 90v2M166 252v3M34 201v3M171 152v1M103 43v1M49 33v1M214 174v2M79 285v1M7 41v2M138 113v1M92 117v2M88 121v3M175 134v2M199 235v1M145 146v1M255 60v2M201 202v1M10 295v2M66 329v1M109 39v1M142 84v2M5 216v3M246 277v2M0 84v1M95 4v1M169 109v1M20 276v2M261 232v1M160 283v2M196 246v1M168 85v1M116 250v2M160 108v2M209 139v2M1 212v1M54 285v3M32 173v1M241 108v1M159 51v1M177 191v2M67 30v1M86 157v1M151 128v3M64 25v1M128 101v1M67 130v2M187 10v3M193 117v1M237 172v1M235 185v1M248 53v3M64 17v1M163 127v1M14 92v1M25 209v1M219 85v3M21 194v2M41 190v1M220 20v2M125 48v3M91 170v1M103 303v3M260 142v2M23 102v1M203 122v2M118 56v2M205 177v1M12 183v1M26 238v1M68 181v1M140 291v3M249 204v1M186 2v1M205 319v2M244 143v3M150 318v1M74 81v1M260 218v1M97 268v1M99 232v1M62 326v3M77 324v2M47 53v1M40 81v3M254 198v2M112 318v1M225 233v1M209 35v1M20 52v3M220 174v3M156 93v3M57 304v3M175 207v3M210 261v2M218 52v1M211 19v1M25 131v1M45 64v1M242 183v1M109 172v2M126 299v3M260 59v3M159 190v1M199 57v1M119 38v1M105 301v2M122 113v1M53 11v2M15 95v1M148 282v1M76 106v1M10 316v1M43 265v1M244 52v3M190 117v3M114 207v2M165 307v1M56 222v3M146 301v1M40 144v2M26 213v2M15 324v1M0 266v3M165 52v2M108 150v1M125 57v2M13 93v3M57 130v3M23 119v1M192 226v2M106 103v1M63 200v1M251 251v1M36 164v1M30 32v3M209 325v2M251 296v1M174 13v1"/></g></defs><use href="#wt" x="0.5" y="0"/><use href="#wt" x="265.5" y="0"/><use href="#wt" x="530.5" y="0"/><use href="#wt" x="795.5" y="0"/></svg>
<svg width="1366" height="700"><path d="M840.5 364V694" stroke="#fff000" stroke-width="1" stroke-dasharray="2 3 5 2 1 4 3 2" opacity="0.55"/><path d="M800.3 364V694" stroke="#fff000" stroke-width="1.6"/><path d="M792.5 366V694" stroke="#3cc83c" stroke-width="1"/><path d="M792.5 366V694" stroke="#222" stroke-width="1" stroke-dasharray="4 2"/><path d="M801.5 366V694" stroke="#3cc83c" stroke-width="1"/><path d="M801.5 366V694" stroke="#222" stroke-width="1" stroke-dasharray="4 2"/><path d="M357.6 366V694" stroke="#8a8a8a" stroke-width="3.4"/><path d="M357.6 366V694" stroke="#000" stroke-width="2"/><path d="M357.6 366V694" stroke="#fff" stroke-width="1.2" stroke-dasharray="4 2.4"/><path d="M366.7 366V694" stroke="#8a8a8a" stroke-width="3.4"/><path d="M366.7 366V694" stroke="#000" stroke-width="2"/><path d="M366.7 366V694" stroke="#fff" stroke-width="1.2" stroke-dasharray="4 2.4"/><rect x="764" y="358.5" width="66" height="5" rx="2" fill="#fff"/><path d="M766 361H830" stroke="#6a6a6a" stroke-width="2" stroke-dasharray="2 2" shape-rendering="crispEdges"/></svg>
<div class="r" style="left:709.5px;top:625px;width:175.3px;height:58.8px;background:rgba(52,52,52,0.89);border-radius:4.5px;"></div>
<span class="t mono" style="left:719.0px;top:638px;font-size:13.7px;color:#fff;letter-spacing:-0.011px;">Freq: 80.001.85 MHz</span>
<span class="t mono" style="left:719.0px;top:661px;font-size:13.7px;color:#fff;letter-spacing:-0.011px;">Span:  ±163.940 kHz</span>
<div class="r" style="left:268px;top:694px;width:1058px;height:27px;background:#000;"></div>
<div class="r" style="left:268px;top:694px;width:1058px;height:13px;background:linear-gradient(#4c4c4c,#2c2c2c 45%,#000);"></div>
<div class="r" style="left:523px;top:694px;width:456px;height:27px;background:linear-gradient(#6e6e6e 0%,#4a4a4a 35%,#383838 70%,#2e2e2e 100%);"></div>
<div class="r" style="left:523px;top:694px;width:456px;height:27px;background:radial-gradient(ellipse 250px 17px at 50% 100%,rgba(170,165,0,0.62),rgba(140,135,0,0.32) 50%,rgba(110,105,0,0) 100%);"></div>
<div class="r" style="left:522px;top:694px;width:1.5px;height:27px;background:#d0d0d0;"></div>
<div class="r" style="left:979px;top:694px;width:1.5px;height:27px;background:#d0d0d0;"></div>
<div class="r" style="left:749.5px;top:694px;width:1.4px;height:27px;background:#fff000;"></div>
<svg width="1366" height="730"><rect x="303" y="694" width="1" height="3" fill="#a0a0a0"/><rect x="317" y="694" width="1" height="3" fill="#a0a0a0"/><rect x="331" y="694" width="1" height="5" fill="#a0a0a0"/><rect x="345" y="694" width="1" height="3" fill="#a0a0a0"/><rect x="359" y="694" width="1" height="3" fill="#a0a0a0"/><rect x="373" y="694" width="1" height="3" fill="#a0a0a0"/><rect x="387" y="694" width="1" height="3" fill="#a0a0a0"/><rect x="400" y="694" width="1" height="3" fill="#a0a0a0"/><rect x="414" y="694" width="1" height="3" fill="#a0a0a0"/><rect x="428" y="694" width="1" height="3" fill="#a0a0a0"/><rect x="442" y="694" width="1" height="3" fill="#a0a0a0"/><rect x="456" y="694" width="1" height="3" fill="#a0a0a0"/><rect x="470" y="694" width="1" height="5" fill="#a0a0a0"/><rect x="484" y="694" width="1" height="3" fill="#a0a0a0"/><rect x="498" y="694" width="1" height="3" fill="#a0a0a0"/><rect x="512" y="694" width="1" height="3" fill="#a0a0a0"/><rect x="526" y="694" width="1" height="3" fill="#a0a0a0"/><rect x="539" y="694" width="1" height="3" fill="#a0a0a0"/><rect x="553" y="694" width="1" height="3" fill="#a0a0a0"/><rect x="567" y="694" width="1" height="3" fill="#a0a0a0"/><rect x="581" y="694" width="1" height="3" fill="#a0a0a0"/><rect x="595" y="694" width="1" height="3" fill="#a0a0a0"/><rect x="609" y="694" width="1" height="5" fill="#a0a0a0"/><rect x="623" y="694" width="1" height="3" fill="#a0a0a0"/><rect x="637" y="694" width="1" height="3" fill="#a0a0a0"/><rect x="651" y="694" width="1" height="3" fill="#a0a0a0"/><rect x="665" y="694" width="1" height="3" fill="#a0a0a0"/><rect x="678" y="694" width="1" height="3" fill="#a0a0a0"/><rect x="692" y="694" width="1" height="3" fill="#a0a0a0"/><rect x="706" y="694" width="1" height="3" fill="#a0a0a0"/><rect x="720" y="694" width="1" height="3" fill="#a0a0a0"/><rect x="734" y="694" width="1" height="3" fill="#a0a0a0"/><rect x="748" y="694" width="1" height="5" fill="#a0a0a0"/><rect x="762" y="694" width="1" height="3" fill="#a0a0a0"/><rect x="776" y="694" width="1" height="3" fill="#a0a0a0"/><rect x="790" y="694" width="1" height="3" fill="#a0a0a0"/><rect x="804" y="694" width="1" height="3" fill="#a0a0a0"/><rect x="817" y="694" width="1" height="3" fill="#a0a0a0"/><rect x="831" y="694" width="1" height="3" fill="#a0a0a0"/><rect x="845" y="694" width="1" height="3" fill="#a0a0a0"/><rect x="859" y="694" width="1" height="3" fill="#a0a0a0"/><rect x="873" y="694" width="1" height="3" fill="#a0a0a0"/><rect x="887" y="694" width="1" height="5" fill="#a0a0a0"/><rect x="901" y="694" width="1" height="3" fill="#a0a0a0"/><rect x="915" y="694" width="1" height="3" fill="#a0a0a0"/><rect x="929" y="694" width="1" height="3" fill="#a0a0a0"/><rect x="943" y="694" width="1" height="3" fill="#a0a0a0"/><rect x="956" y="694" width="1" height="3" fill="#a0a0a0"/><rect x="970" y="694" width="1" height="3" fill="#a0a0a0"/><rect x="984" y="694" width="1" height="3" fill="#a0a0a0"/><rect x="998" y="694" width="1" height="3" fill="#a0a0a0"/><rect x="1012" y="694" width="1" height="3" fill="#a0a0a0"/><rect x="1026" y="694" width="1" height="5" fill="#a0a0a0"/><rect x="1040" y="694" width="1" height="3" fill="#a0a0a0"/><rect x="1054" y="694" width="1" height="3" fill="#a0a0a0"/><rect x="1068" y="694" width="1" height="3" fill="#a0a0a0"/><rect x="1082" y="694" width="1" height="3" fill="#a0a0a0"/><rect x="1095" y="694" width="1" height="3" fill="#a0a0a0"/><rect x="1109" y="694" width="1" height="3" fill="#a0a0a0"/><rect x="1123" y="694" width="1" height="3" fill="#a0a0a0"/><rect x="1137" y="694" width="1" height="3" fill="#a0a0a0"/><rect x="1151" y="694" width="1" height="3" fill="#a0a0a0"/><rect x="1165" y="694" width="1" height="5" fill="#a0a0a0"/><rect x="1179" y="694" width="1" height="3" fill="#a0a0a0"/><rect x="1193" y="694" width="1" height="3" fill="#a0a0a0"/><rect x="1207" y="694" width="1" height="3" fill="#a0a0a0"/></svg>
<span class="t" style="left:312.6px;top:706px;font-size:12px;color:#aeaeae;">79.700</span>
<span class="t" style="left:451.6px;top:706px;font-size:12px;color:#aeaeae;">79.800</span>
<span class="t" style="left:590.6px;top:706px;font-size:12px;color:#aeaeae;">79.900</span>
<span class="t" style="left:729.6px;top:706px;font-size:12px;color:#aeaeae;">80.000</span>
<span class="t" style="left:868.6px;top:706px;font-size:12px;color:#aeaeae;">80.100</span>
<span class="t" style="left:1007.6px;top:706px;font-size:12px;color:#aeaeae;">80.200</span>
<span class="t" style="left:1146.6px;top:706px;font-size:12px;color:#aeaeae;">80.300</span>
<div class="r" style="left:1208px;top:694px;width:118px;height:27px;background:#f0f0f0;"></div>
<div class="r" style="left:268px;top:694px;width:28px;height:27px;background:#f0f0f0;"></div>
<div class="r" style="left:1208px;top:694px;width:118px;height:1px;background:#b4b4b4;"></div>
<div class="r" style="left:268px;top:694px;width:28px;height:1px;background:#b4b4b4;"></div>
<div class="r" style="left:270px;top:696px;width:25px;height:24px;background:#e4e4e4;border:1px solid #b0b0b0;box-sizing:border-box;"></div>
<div class="r" style="left:1209px;top:696px;width:37px;height:24px;background:#e4e4e4;border:1px solid #b0b0b0;box-sizing:border-box;"></div>
<div class="r" style="left:1248px;top:696px;width:50px;height:24px;background:#e4e4e4;border:1px solid #b0b0b0;box-sizing:border-box;"></div>
<div class="r" style="left:1300px;top:696px;width:24px;height:24px;background:#e4e4e4;border:1px solid #b0b0b0;box-sizing:border-box;"></div>
<svg width="1366" height="730"><circle cx="282.5" cy="707.900" r="7" fill="#f6f6f6" stroke="#4a4a4a" stroke-width="1.500"/><path d="M282.7 704.800v6.200l-3.800-3.100zM286.5 704.800v6.200l-3.800-3.100z" fill="#2a2a2a"/><circle cx="1312.1" cy="707.900" r="7" fill="#f6f6f6" stroke="#4a4a4a" stroke-width="1.500"/><path d="M1311.8999999999999 704.800v6.200l3.800-3.100zM1308.1 704.800v6.200l3.800-3.100z" fill="#2a2a2a"/><rect x="1219.500" y="704.500" width="15" height="9" rx="1" fill="#fafafa" stroke="#333" stroke-width="1.100"/><path d="M1221.500 707h11.500M1221.500 709h11.500M1221.500 711h11.500" stroke="#333" stroke-width="1" stroke-dasharray="1.200 0.800"/><path d="M1223.500 711h7" stroke="#333" stroke-width="1"/><path d="M1227.500 704.500q0.500-2.500 4.500-3.500" fill="none" stroke="#333" stroke-width="0.900"/><path d="M1286 704.700v7.400l4.300-3.700z" fill="#000"/></svg>
<span class="t" style="left:1257.0px;top:702px;font-size:12.5px;color:#1a1030;letter-spacing:-0.601px;">x2</span>
<div class="r" style="left:1327px;top:51px;width:39px;height:671px;background:#000;"></div>
<div class="r" style="left:1326px;top:51px;width:1.5px;height:671px;background:#4a4a4a;"></div>
<div class="r" style="left:1328px;top:51px;width:38px;height:30px;background:linear-gradient(#808080 0%,#505050 6%,#2c2c2c 30%,#161616 60%,#000 100%);"></div>
<span class="t" style="left:1334.7px;top:61px;font-size:11px;color:#f4f4f4;">Auto</span>
<div class="r" style="left:1328px;top:80px;width:38px;height:1px;background:#3a3a3a;"></div>
<span class="t" style="left:1340.7px;top:118px;font-size:8px;color:#a8a8b8;">-10</span>
<span class="t" style="left:1340.7px;top:158px;font-size:8px;color:#a8a8b8;">-20</span>
<span class="t" style="left:1340.7px;top:198px;font-size:8px;color:#a8a8b8;">-30</span>
<span class="t" style="left:1340.7px;top:238px;font-size:8px;color:#a8a8b8;">-40</span>
<span class="t" style="left:1340.7px;top:278px;font-size:8px;color:#a8a8b8;">-50</span>
<span class="t" style="left:1340.7px;top:318px;font-size:8px;color:#a8a8b8;">-60</span>
<span class="t" style="left:1340.7px;top:358px;font-size:8px;color:#a8a8b8;">-70</span>
<span class="t" style="left:1340.7px;top:398px;font-size:8px;color:#a8a8b8;">-80</span>
<span class="t" style="left:1340.7px;top:438px;font-size:8px;color:#a8a8b8;">-90</span>
<span class="t" style="left:1338.5px;top:478px;font-size:8px;color:#a8a8b8;">-100</span>
<span class="t" style="left:1338.8px;top:518px;font-size:8px;color:#a8a8b8;">-110</span>
<span class="t" style="left:1338.5px;top:558px;font-size:8px;color:#a8a8b8;">-120</span>
<span class="t" style="left:1338.5px;top:598px;font-size:8px;color:#a8a8b8;">-130</span>
<span class="t" style="left:1338.5px;top:638px;font-size:8px;color:#a8a8b8;">-140</span>
<span class="t" style="left:1338.5px;top:678px;font-size:8px;color:#a8a8b8;">-150</span>
<div class="r" style="left:1329px;top:396px;width:34px;height:75.5px;background:linear-gradient(#e8e000 0%,#fff000 5%,#ffffff 7%,#ffffff 32%,#e0e6ff 42%,#a8b8f8 50%,#7090f0 58%,#5060c8 64%,#3c4490 72%,#28306c 80%,#1c2040 88%,#000440 96%,#000030 100%);"></div>
<div class="r" style="left:1329px;top:471.5px;width:34px;height:1.5px;background:#fff;"></div>
<div class="r" style="left:1332px;top:396px;width:28px;height:14px;background:rgba(90,90,90,0.78);border-radius:0 0 4px 4px;"></div>
<div class="r" style="left:1332px;top:432px;width:28px;height:18px;background:rgba(50,60,120,0.8);border-radius:4px;"></div>
<span class="t" style="left:1340.7px;top:398px;font-size:8px;color:#cfcfcf;">-80</span>
<span class="t" style="left:1340.7px;top:438px;font-size:8px;color:#dde;">-90</span>
<div class="r" style="left:0px;top:722px;width:1366px;height:18px;background:#f0f0f0;"></div>
<span class="t" style="left:9.0px;top:729px;font-size:11px;color:#6e6e6e;letter-spacing:-0.05px;">RTL Dongle USB - R820T, BW = 1.000 MHz</span>
<span class="t" style="left:1041.5px;top:729px;font-size:11px;color:#1a1030;letter-spacing:-0.353px;">CPU: 10.9%</span>
<span class="t" style="left:1196.5px;top:729px;font-size:11px;color:#1a1030;letter-spacing:0.169px;">Audio: 67ms</span>
<div class="r" style="left:1113px;top:729px;width:70px;height:12px;background:#e6e6e6;border:1px solid #bcbcbc;box-sizing:border-box;"></div>
<div class="r" style="left:1115px;top:732px;width:1px;height:8px;background:#06b025;"></div>
<div class="r" style="left:1273px;top:729px;width:70px;height:12px;background:#e6e6e6;border:1px solid #bcbcbc;box-sizing:border-box;"></div>
<div class="r" style="left:1276px;top:732px;width:59px;height:8px;background:#06b025;"></div>
<div class="r" style="left:0px;top:738px;width:1366px;height:30px;background:#ebebeb;"></div>
<div class="r" style="left:447px;top:738px;width:152px;height:27px;background:#eeeeee;"></div>
<div class="r" style="left:447px;top:765.5px;width:152px;height:2.5px;background:#1c4a5c;"></div>
<span class="t" style="left:471.0px;top:748px;font-size:11.5px;color:#111;letter-spacing:-0.281px;">RTL Dongle USB - R82...</span>
<span class="t" style="left:1246.5px;top:748px;font-size:11.5px;color:#222;letter-spacing:-1.382px;">CES</span>
<span class="t" style="left:1280.4px;top:748px;font-size:11.5px;color:#222;letter-spacing:-0.356px;">13:08</span>
<svg width="1366" height="768"><path d="M10 746.2l6.6-0.9v7.1h-6.6zM17.6 745.1l8.4-1.2v8.5h-8.4zM10 753.4h6.6v7.1l-6.6-0.9zM17.6 753.4h8.4v8.5l-8.4-1.2z" fill="#000"/><circle cx="57.5" cy="749.5" r="4.6" fill="none" stroke="#000" stroke-width="1.4"/><path d="M54 753.2l-7 7" stroke="#000" stroke-width="1.6"/><circle cx="90" cy="753" r="6.4" fill="none" stroke="#000" stroke-width="2.2"/><path d="M118.5 747.5v-2.5h10v2.5M118.5 758.5v2.5h10v-2.5" fill="none" stroke="#000" stroke-width="1.2"/><rect x="119.5" y="749" width="8" height="8" fill="none" stroke="#000" stroke-width="1.3"/><path d="M132.5 745v3M132.5 750.5v10.5" stroke="#000" stroke-width="1.4"/><path d="M157 746h6l1.5 1.5h8.5v12h-16z" fill="#f4b400"/><path d="M157 749.5h16v10h-16z" fill="#ffd75e"/><path d="M160 755h10v5h-2.8v-2.6h-4.4v2.6h-2.8z" fill="#2f86d6"/><rect x="197.5" y="747.5" width="12" height="9" fill="#eaf4fb" stroke="#8a9098" stroke-width="1"/><path d="M199 753.5l2-2.5 2 2 2-3 2 2.5 2-1" fill="none" stroke="#2a7ab8" stroke-width="1"/><path d="M200 760h7M203.5 757v3" stroke="#8a9098" stroke-width="1.2"/><rect x="194" y="752" width="2" height="8" fill="#6a7078"/><circle cx="195" cy="751" r="1" fill="#3aa03a"/><rect x="231.5" y="747.5" width="15" height="11" fill="#f4f8fa" stroke="#5a7a80" stroke-width="1"/><rect x="231" y="747" width="16" height="2.2" fill="#4a6a70"/><rect x="235" y="751.5" width="4" height="5" fill="#1e6ed0"/><path d="M240.5 752h4M240.5 754h4M240.5 756h4" stroke="#8a9aa0" stroke-width="0.8"/><path d="M271 747l10-1 2 13-11 1.5z" fill="#9cc6ee" stroke="#6a9acc" stroke-width="0.8"/><path d="M271 747l10-1" stroke="#3a5a8a" stroke-width="1.6" stroke-dasharray="1 1"/><path d="M273 750l7.5-0.8M273.3 752.5l7.5-0.8M273.6 755l7.5-0.8" stroke="#5a8ac0" stroke-width="0.7"/><path d="M272 760.5l11-1.5" stroke="#d8d0b0" stroke-width="1.2"/><rect x="306.5" y="746.5" width="13" height="13" rx="2" fill="#d84a20"/><path d="M313 744.5l7.5 8.5-7.5 8.5-7.5-8.5z" fill="#e8a850" stroke="#8a5a20" stroke-width="0.8"/><ellipse cx="313" cy="753" rx="4.5" ry="2.8" fill="#fff" stroke="#333" stroke-width="0.7"/><circle cx="313" cy="753" r="1.9" fill="#1a3a9a"/><path d="M342.5 745.5h12.5l2 2v13h-14.5z" fill="#1c3ca8" stroke="#0c1c68" stroke-width="0.8"/><rect x="345" y="745.8" width="7.5" height="4.6" fill="#dfe6f4"/><rect x="349.8" y="746.3" width="1.8" height="3.4" fill="#1c3ca8"/><rect x="344.6" y="753" width="10.5" height="7" fill="#f4f4f4"/><circle cx="386.5" cy="753" r="7.6" fill="#1b7fd4"/><path d="M380 749.5a7.6 7.6 0 0 1 14 1.5q-3-4.5-8-3t-6 1.5z" fill="#35c2a0"/><path d="M390.5 746.5q3.5 2.5 3.5 6.5h-6.5z" fill="#57d06a"/><path d="M383.5 754.5q0-4 4-4.5q-2 2.3-0.8 4.8t4.8 2.4q-5 2.6-8-2.7z" fill="#e8f6ff"/><ellipse cx="424" cy="753" rx="7.6" ry="7.8" fill="#e8141c"/><ellipse cx="424" cy="753" rx="3.1" ry="5.6" fill="#fff"/><circle cx="459" cy="753" r="7.4" fill="#a04a50" stroke="#7a3038" stroke-width="0.8"/><circle cx="459" cy="751" r="3.6" fill="none" stroke="#e0c8c8" stroke-width="0.8"/><circle cx="459" cy="751" r="1.6" fill="none" stroke="#e0c8c8" stroke-width="0.8"/><path d="M459 751v6M456.5 759l2.5-6 2.5 6z" stroke="#f0e0e0" stroke-width="0.8" fill="#d8b8b8"/><circle cx="1082" cy="753" r="7.6" fill="#3a8ad8"/><circle cx="1082" cy="753" r="7.6" fill="none" stroke="#9ac8f0" stroke-width="1"/><path d="M1078 758l5-10M1081.5 758.5l4.5-9.5" stroke="#e8f4ff" stroke-width="1.6"/><circle cx="1102" cy="748.5" r="3.9" fill="#fff" stroke="#1018b0" stroke-width="1.8"/><path d="M1102 746.5v2.2h1.8" stroke="#1018b0" stroke-width="0.9" fill="none"/><path d="M1103 753.5q0-3 3.5-3t3.5 3v4q0 2.5-3.5 2.5t-3.5-2.5z" fill="#bcbcbc" stroke="#222" stroke-width="1"/><path d="M1105 753.5v5M1108 753.5v5M1105 756h3" stroke="#222" stroke-width="0.9"/><rect x="1127.5" y="745.5" width="4.4" height="3.2" fill="#fff" stroke="#222" stroke-width="0.9"/><rect x="1126" y="748.7" width="7.4" height="11" rx="1" fill="#fff" stroke="#222" stroke-width="1"/><path d="M1132.5 757l2 2 3.6-4.2" fill="none" stroke="#222" stroke-width="1.1"/><path d="M1153.5 745.6q-2.6 1.8-6 2v5q0 5 6 8q6-3 6-8v-5q-3.4-0.2-6-2z" fill="#fff" stroke="#222" stroke-width="1"/><path d="M1153.5 745.6v15M1147.5 752.5h12" stroke="#222" stroke-width="0.9"/><path d="M1153.5 746.6v5.9h-5.5v-4.4q3-0.2 5.500-1.500zM1153.5 752.5h5.5q0 4-5.5 7z" fill="#333"/><circle cx="1158" cy="757.5" r="3.6" fill="#18a048"/><path d="M1156.3 757.5l1.3 1.4 2.3-2.6" fill="none" stroke="#fff" stroke-width="0.9"/><rect x="1175.500" y="749" width="9.500" height="7.500" fill="none" stroke="#222" stroke-width="1"/><rect x="1185" y="751.200" width="1.400" height="3" fill="#222"/><path d="M1178.200 750.800l4 4M1182.200 750.800l-4 4" stroke="#222" stroke-width="1"/><path d="M1170.700 747v3M1173.300 747v3" stroke="#222" stroke-width="1"/><path d="M1169.700 750h4.600v1.500q0 2-2.300 2t-2.300-2z" fill="#222"/><path d="M1172 753v4.500" stroke="#222" stroke-width="1"/><path d="M1200.5 759.5a7 7 0 0 1 7-7" fill="none" stroke="#222" stroke-width="1.2"/><path d="M1203.3 759.5a4.200 4.200 0 0 1 4.200-4.200" fill="none" stroke="#222" stroke-width="1.2"/><path d="M1197.800 759.500a9.700 9.700 0 0 1 9.700-9.700" fill="none" stroke="#222" stroke-width="1.2"/><circle cx="1206.8" cy="758.8" r="1.2" fill="#222"/><path d="M1218.5 751h2.500l3.500-3.200v10.400l-3.500-3.200h-2.500z" fill="none" stroke="#222" stroke-width="1"/><path d="M1226.5 750.500q2 2.500 0 5" fill="none" stroke="#444" stroke-width="0.9"/><path d="M1228.300 748.800q3.200 4.200 0 8.400" fill="none" stroke="#888" stroke-width="0.9"/><path d="M1230.200 747.300q4.200 5.700 0 11.400" fill="none" stroke="#bbb" stroke-width="0.9"/><path d="M1325.500 746.500h14.500v11h-5.500l-2.700 2.800v-2.800h-6.300z" fill="none" stroke="#111" stroke-width="1.1"/></svg>
<span class="t" style="left:346.2px;top:754px;font-size:6.5px;color:#222;font-weight:bold;">64</span>
<div class="r" style="left:1364px;top:32px;width:2px;height:690px;background:#f8f8fc;"></div>
<div class="r" style="left:1327px;top:721px;width:39px;height:1.5px;background:#fafafa;"></div>
<div class="r" style="left:1361.5px;top:737px;width:1px;height:31px;background:#b4b4b4;"></div>
<svg width="1366" height="60"><circle cx="22.5" cy="26.3" r="20" fill="#efefef" stroke="#a6a6a6" stroke-width="1"/><path d="M15.200 20.500V34.500H18M15.200 25.800H18" fill="none" stroke="#8a8a8a" stroke-width="0.9"/><rect x="12.3" y="15.3" width="5.2" height="5.2" rx="0.8" fill="#7aa4e0" stroke="#3a6ac0" stroke-width="0.9"/><rect x="18.2" y="23.2" width="5.2" height="5.2" rx="0.8" fill="#7aa4e0" stroke="#3a6ac0" stroke-width="0.9"/><rect x="18.2" y="31.5" width="5.2" height="5.2" rx="0.8" fill="#7aa4e0" stroke="#3a6ac0" stroke-width="0.9"/><path d="M20 17.500h7M28.5 17.500h2.500M26 26.500h7M26 34.500h7" stroke="#555" stroke-width="0.9"/><path d="M53.300 14.800l6.700-6.300 6.700 6.300" fill="none" stroke="#4a4a4a" stroke-width="1.3"/><rect x="55" y="15" width="10" height="6.500" fill="#f2ead8" stroke="#9a9080" stroke-width="0.6"/><rect x="58.300" y="16.200" width="3.400" height="5" fill="#b83a20"/><rect x="59.2" y="18.5" width="1.6" height="2.700" fill="#3a7a2a"/><path d="M54 21.800h12" stroke="#444" stroke-width="0.9"/><rect x="63.200" y="9" width="1.500" height="3" fill="#666"/><circle cx="82.500" cy="14.800" r="5.600" fill="none" stroke="#f0f0f0" stroke-width="4.200"/><circle cx="82.500" cy="14.800" r="7.700" fill="none" stroke="#b0b0b0" stroke-width="0.600"/><circle cx="82.500" cy="14.800" r="5.600" fill="none" stroke="#e85020" stroke-width="4.200" stroke-dasharray="4.400 4.400" stroke-dashoffset="2.200"/><path d="M96.500 10h4.500l1 1.500h7.500v8.500h-13z" fill="#f4ebc8"/><path d="M96.500 12.500h13v7.500h-13z" fill="#f8f0d2"/><circle cx="125.800" cy="14.800" r="7.200" fill="#fafafa" stroke="#b4b4b4" stroke-width="1.500"/><path d="M123.500 11v7.600l6.200-3.800z" fill="#b4b4b4"/><circle cx="147.800" cy="14.800" r="7.200" fill="#fafafa" stroke="#3a3a3a" stroke-width="1.600"/><rect x="144.800" y="11.800" width="6" height="6" fill="#222"/><circle cx="169.800" cy="14.800" r="6.800" fill="#27348e"/><circle cx="169.800" cy="14.800" r="6.800" fill="none" stroke="#7a88cc" stroke-width="0.900"/><path d="M163.500 12.500q6.300-3.500 12.600 0M163.500 17.100q6.300 3.500 12.600 0" fill="none" stroke="#4a5ab8" stroke-width="0.800"/><path d="M169.800 11.200v7.200M166.200 14.800h7.200" stroke="#f4f4ff" stroke-width="2.600"/><path d="M192 7.800l2.300 4.900 5.300 0.600-3.900 3.700 1 5.300-4.700-2.600-4.700 2.600 1-5.300-3.900-3.700 5.300-0.600z" fill="#f8c830" stroke="#d89a10" stroke-width="0.900"/><path d="M192 10.500l1.400 3.100 3.200 0.400-2.400 2.200-4.500 0.200-2.300-2.400 3.200-0.400z" fill="#fdf0a8"/><path d="M210.800 14v-2.500q0-3.300 3.200-3.300t3.200 3.300v2.500" fill="none" stroke="#b8b8b8" stroke-width="1.500"/><rect x="209" y="13.800" width="10" height="8" rx="0.800" fill="#e8b818" stroke="#b88a08" stroke-width="0.700"/><rect x="210" y="14.600" width="3" height="6.400" fill="#f8dc60"/><rect x="229" y="10.500" width="14" height="10" rx="1" fill="#1e1e1e"/><rect x="232" y="8.600" width="5" height="2.500" fill="#333"/><circle cx="237" cy="15.500" r="3.400" fill="#9a9aa8" stroke="#e0e0e0" stroke-width="0.800"/><circle cx="237" cy="15.500" r="1.500" fill="#3a3a4a"/><rect x="230.200" y="11.600" width="2.200" height="1.400" fill="#c8c8c8"/><path d="M258 11.200l5.800 9.300q-5.800 2.400-11.600 0z" fill="#7a9ad0" stroke="#4a6aa8" stroke-width="0.600"/><path d="M258 11.200l1.800 10.800q-1.800 0.300-3.600 0z" fill="#b4c8ea"/><circle cx="258" cy="9" r="1.700" fill="#4a6ab0"/><path d="M272.200 8.500l0.500 7.600 7-0.900-2.300-2.300q2.600-2.600 5-0.400q2.800 3.200 1.500 9.600q5.600-6.200 4.200-10.800q-2.800-6.400-10.400-3.400q-1.500 0.700-2.800 2.100z" fill="#2a74da" stroke="#1a56b4" stroke-width="0.500"/><path d="M294.200 12.500h5.500" stroke="#000" stroke-width="1.100"/><path d="M294.200 14.700h5.600l-2.800 3z" fill="#000"/><rect x="1281.300" y="33" width="10.400" height="14" rx="5.200" fill="#dcdcdc" stroke="#b8b8b8" stroke-width="0.600"/><path d="M1283 38.200l3.500-2.900 3.500 2.900M1283 41.800l3.500 2.900 3.500-2.900" fill="none" stroke="#555" stroke-width="2.600" stroke-linejoin="round" stroke-linecap="round"/><path d="M1283 38.200l3.500-2.900 3.500 2.900M1283 41.800l3.500 2.900 3.500-2.900" fill="none" stroke="#fff" stroke-width="1.300" stroke-linejoin="round" stroke-linecap="round"/><rect x="1351.800" y="31" width="4.400" height="16.400" rx="1" transform="rotate(30 1354 39.200)" fill="#c9c9c9"/><rect x="1351.800" y="31" width="4.400" height="16.400" rx="1" transform="rotate(90 1354 39.200)" fill="#c9c9c9"/><rect x="1351.800" y="31" width="4.400" height="16.400" rx="1" transform="rotate(150 1354 39.200)" fill="#c9c9c9"/><circle cx="1354" cy="39.200" r="6.300" fill="#cbcbcb"/><circle cx="1354" cy="39.200" r="3.100" fill="#f2f4fc" stroke="#b4b8c4" stroke-width="0.800"/></svg></body></html>
